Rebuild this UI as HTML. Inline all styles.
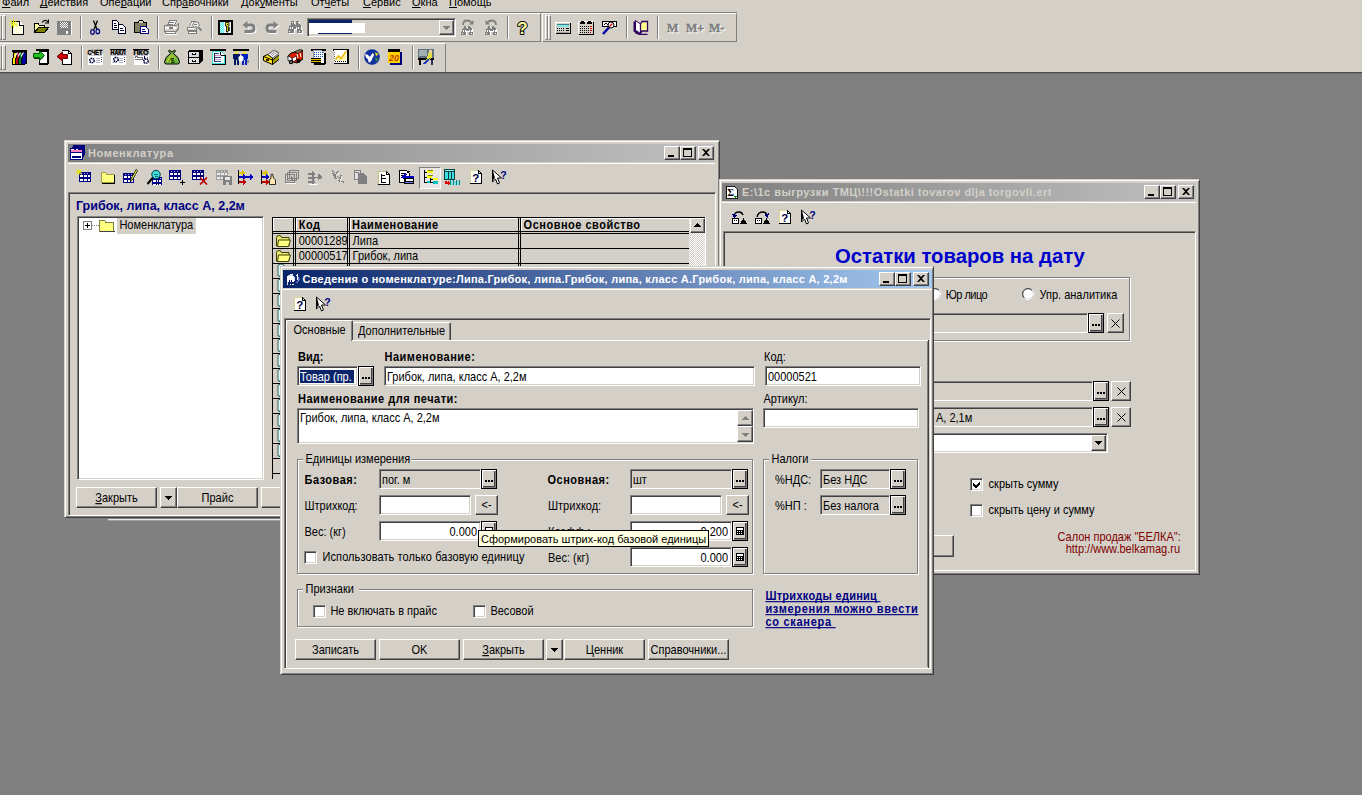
<!DOCTYPE html>
<html lang="ru"><head><meta charset="utf-8"><title>1C</title>
<style>
html,body{margin:0;padding:0}
body{width:1362px;height:795px;overflow:hidden;background:#808080;position:relative;font-family:"Liberation Sans",sans-serif;font-size:11px;color:#000}
div,svg.i{position:absolute;box-sizing:border-box}
.t{white-space:nowrap}
.face{background:#d4d0c8}
.win{background:#d4d0c8;border:1px solid;border-color:#d4d0c8 #404040 #404040 #d4d0c8;box-shadow:inset 1px 1px 0 #fff,inset -1px -1px 0 #808080}
.btn{background:#d4d0c8;border:1px solid;border-color:#fff #404040 #404040 #fff;box-shadow:inset -1px -1px 0 #808080}
.btn.k{border-color:#000;box-shadow:inset 1px 1px 0 #fff,inset -1px -1px 0 #808080,inset -2px -2px 0 #404040}
.sunk{border:1px solid;border-color:#808080 #fff #fff #808080;box-shadow:inset 1px 1px 0 #404040,inset -1px -1px 0 #d4d0c8;background:#fff}
.sunk.g{background:#d4d0c8}
.panel{border:1px solid;border-color:#808080 #fff #fff #808080;box-shadow:inset 1px 1px 0 #404040}
.grp{border:1px solid;border-color:#808080 #fff #fff #808080;box-shadow:inset 1px 1px 0 #fff,1px 1px 0 #fff inset,0 0 0 0 #fff}
.grp2{border:1px solid #808080;box-shadow:1px 1px 0 #fff,inset 1px 1px 0 #fff}
.ta{background:linear-gradient(90deg,#0a246a,#a6caf0)}
.ti{background:linear-gradient(90deg,#808080,#c0c0c0)}
.c{text-align:center}
.sepv{width:2px;border-left:1px solid #808080;border-right:1px solid #fff}
.chk{background:#fff;border:1px solid;border-color:#808080 #fff #fff #808080;box-shadow:inset 1px 1px 0 #404040,inset -1px -1px 0 #d4d0c8}
u{text-decoration:underline;text-decoration-skip-ink:none}
</style></head>
<body>
<!-- part_top -->
<div class="face" style="left:0px;top:0px;width:1362px;height:72px;"></div>
<div style="left:0px;top:72px;width:1362px;height:1px;background:#4c4c4c"></div>
<div style="left:0px;top:73px;width:1362px;height:1px;background:#707070"></div>
<div class="t" style="top:-3.91px;font-size:11px;line-height:13px;left:2px;"><u>Ф</u>айл</div>
<div class="t" style="top:-3.91px;font-size:11px;line-height:13px;left:40px;"><u>Д</u>ействия</div>
<div class="t" style="top:-3.91px;font-size:11px;line-height:13px;left:100px;">Опе<u>р</u>ации</div>
<div class="t" style="top:-3.91px;font-size:11px;line-height:13px;left:162px;">Спр<u>а</u>вочники</div>
<div class="t" style="top:-3.91px;font-size:11px;line-height:13px;left:241px;">Док<u>у</u>менты</div>
<div class="t" style="top:-3.91px;font-size:11px;line-height:13px;left:311px;">От<u>ч</u>еты</div>
<div class="t" style="top:-3.91px;font-size:11px;line-height:13px;left:363px;"><u>С</u>ервис</div>
<div class="t" style="top:-3.91px;font-size:11px;line-height:13px;left:412px;"><u>О</u>кна</div>
<div class="t" style="top:-3.91px;font-size:11px;line-height:13px;left:449px;"><u>П</u>омощь</div>
<div style="left:0px;top:12px;width:541px;height:1px;background:#808080"></div>
<div style="left:0px;top:13px;width:541px;height:29px;border-top:1px solid #fff;border-bottom:1px solid #808080;border-right:1px solid #808080"></div>
<div style="left:542px;top:13px;width:195px;height:29px;border:1px solid;border-color:#fff #808080 #808080 #fff"></div>
<div style="left:541px;top:12px;width:196px;height:1px;background:#808080"></div>
<div style="left:-1px;top:15px;width:3px;height:25px;border:1px solid;border-color:#fff #808080 #808080 #fff"></div>
<div style="left:2px;top:15px;width:4px;height:25px;border:1px solid;border-color:#fff #808080 #808080 #fff"></div>
<div style="left:545px;top:15px;width:3px;height:25px;border:1px solid;border-color:#fff #808080 #808080 #fff"></div>
<div style="left:548px;top:15px;width:3px;height:25px;border:1px solid;border-color:#fff #808080 #808080 #fff"></div>
<svg class="i" style="left:8.5px;top:19px;" width="16" height="16" viewBox="0 0 16 16" shape-rendering="crispEdges"><path d="M3.5 2.5h7l4 4v9h-11z" fill="#fff" stroke="#000" stroke-width="1" /><rect x="5" y="4" width="1" height="1" fill="#ffffc0"/><rect x="7" y="4" width="1" height="1" fill="#ffffc0"/><rect x="9" y="4" width="1" height="1" fill="#ffffc0"/><rect x="11" y="4" width="1" height="1" fill="#ffffc0"/><rect x="6" y="5" width="1" height="1" fill="#ffffc0"/><rect x="8" y="5" width="1" height="1" fill="#ffffc0"/><rect x="10" y="5" width="1" height="1" fill="#ffffc0"/><rect x="12" y="5" width="1" height="1" fill="#ffffc0"/><rect x="5" y="6" width="1" height="1" fill="#ffffc0"/><rect x="7" y="6" width="1" height="1" fill="#ffffc0"/><rect x="9" y="6" width="1" height="1" fill="#ffffc0"/><rect x="11" y="6" width="1" height="1" fill="#ffffc0"/><rect x="6" y="7" width="1" height="1" fill="#ffffc0"/><rect x="8" y="7" width="1" height="1" fill="#ffffc0"/><rect x="10" y="7" width="1" height="1" fill="#ffffc0"/><rect x="12" y="7" width="1" height="1" fill="#ffffc0"/><rect x="5" y="8" width="1" height="1" fill="#ffffc0"/><rect x="7" y="8" width="1" height="1" fill="#ffffc0"/><rect x="9" y="8" width="1" height="1" fill="#ffffc0"/><rect x="11" y="8" width="1" height="1" fill="#ffffc0"/><rect x="6" y="9" width="1" height="1" fill="#ffffc0"/><rect x="8" y="9" width="1" height="1" fill="#ffffc0"/><rect x="10" y="9" width="1" height="1" fill="#ffffc0"/><rect x="12" y="9" width="1" height="1" fill="#ffffc0"/><rect x="5" y="10" width="1" height="1" fill="#ffffc0"/><rect x="7" y="10" width="1" height="1" fill="#ffffc0"/><rect x="9" y="10" width="1" height="1" fill="#ffffc0"/><rect x="11" y="10" width="1" height="1" fill="#ffffc0"/><rect x="6" y="11" width="1" height="1" fill="#ffffc0"/><rect x="8" y="11" width="1" height="1" fill="#ffffc0"/><rect x="10" y="11" width="1" height="1" fill="#ffffc0"/><rect x="12" y="11" width="1" height="1" fill="#ffffc0"/><rect x="5" y="12" width="1" height="1" fill="#ffffc0"/><rect x="7" y="12" width="1" height="1" fill="#ffffc0"/><rect x="9" y="12" width="1" height="1" fill="#ffffc0"/><rect x="11" y="12" width="1" height="1" fill="#ffffc0"/><rect x="6" y="13" width="1" height="1" fill="#ffffc0"/><rect x="8" y="13" width="1" height="1" fill="#ffffc0"/><rect x="10" y="13" width="1" height="1" fill="#ffffc0"/><rect x="12" y="13" width="1" height="1" fill="#ffffc0"/><rect x="5" y="14" width="1" height="1" fill="#ffffc0"/><rect x="7" y="14" width="1" height="1" fill="#ffffc0"/><rect x="9" y="14" width="1" height="1" fill="#ffffc0"/><rect x="11" y="14" width="1" height="1" fill="#ffffc0"/><path d="M10.5 2.5v4h4" fill="#fff" stroke="#000" stroke-width="1" /><path d="M0.5 1.5l8 6M8 1l-6 7M0 5h9M4.5 0v9" fill="none" stroke="#e8e800" stroke-width="1" shape-rendering="auto"/><path d="M3 3l3 3M6 3l-3 3" fill="none" stroke="#ffff60" stroke-width="1" shape-rendering="auto"/></svg>
<svg class="i" style="left:32.5px;top:19px;" width="16" height="16" viewBox="0 0 16 16" shape-rendering="crispEdges"><path d="M1.5 13.5v-9h3.5l1 1.5h5v3" fill="#ffffa0" stroke="#000" stroke-width="1" /><path d="M1.5 13.5l4 -5h10l-4 5z" fill="#808000" stroke="#000" stroke-width="1" /><path d="M9 3.5q3 -4 6 -0.5" fill="none" stroke="#000" stroke-width="1.2" shape-rendering="auto"/><path d="M15.5 0.5v3.5h-3.5" fill="none" stroke="#000" stroke-width="1.2" shape-rendering="auto"/></svg>
<svg class="i" style="left:56px;top:19px;" width="16" height="16" viewBox="0 0 16 16" shape-rendering="crispEdges"><rect x="1" y="2" width="14" height="14" fill="#808080"/><rect x="4" y="3" width="1" height="1" fill="#fff"/><rect x="6" y="3" width="1" height="1" fill="#fff"/><rect x="8" y="3" width="1" height="1" fill="#fff"/><rect x="10" y="3" width="1" height="1" fill="#fff"/><rect x="5" y="4" width="1" height="1" fill="#fff"/><rect x="7" y="4" width="1" height="1" fill="#fff"/><rect x="9" y="4" width="1" height="1" fill="#fff"/><rect x="11" y="4" width="1" height="1" fill="#fff"/><rect x="4" y="5" width="1" height="1" fill="#fff"/><rect x="6" y="5" width="1" height="1" fill="#fff"/><rect x="8" y="5" width="1" height="1" fill="#fff"/><rect x="10" y="5" width="1" height="1" fill="#fff"/><rect x="5" y="6" width="1" height="1" fill="#fff"/><rect x="7" y="6" width="1" height="1" fill="#fff"/><rect x="9" y="6" width="1" height="1" fill="#fff"/><rect x="11" y="6" width="1" height="1" fill="#fff"/><rect x="4" y="7" width="1" height="1" fill="#fff"/><rect x="6" y="7" width="1" height="1" fill="#fff"/><rect x="8" y="7" width="1" height="1" fill="#fff"/><rect x="10" y="7" width="1" height="1" fill="#fff"/><rect x="5" y="8" width="1" height="1" fill="#fff"/><rect x="7" y="8" width="1" height="1" fill="#fff"/><rect x="9" y="8" width="1" height="1" fill="#fff"/><rect x="11" y="8" width="1" height="1" fill="#fff"/><rect x="10" y="12" width="2" height="3" fill="#fff"/><rect x="2" y="16" width="14" height="1" fill="#fff"/><rect x="15" y="3" width="1" height="14" fill="#fff"/></svg>
<svg class="i" style="left:87px;top:19px;" width="16" height="16" viewBox="0 0 16 16" shape-rendering="crispEdges"><path d="M6.5 1.5l3.5 9M10.5 1.5l-3.5 9" fill="none" stroke="#000" stroke-width="1.3" shape-rendering="auto"/><ellipse cx="5.5" cy="13" rx="1.8" ry="2.3" fill="none" stroke="#000080" stroke-width="1.2" shape-rendering="auto"/><ellipse cx="10.8" cy="12.4" rx="1.8" ry="2.3" fill="none" stroke="#000080" stroke-width="1.2" shape-rendering="auto"/></svg>
<svg class="i" style="left:109.5px;top:19px;" width="16" height="16" viewBox="0 0 16 16" shape-rendering="crispEdges"><path d="M2.5 1.5h4l2 2v7h-6z" fill="#fff" stroke="#000030" stroke-width="1" /><path d="M8.5 5.5h4l3 3v6h-7z" fill="#fff" stroke="#000030" stroke-width="1" /><rect x="4" y="4" width="2" height="1" fill="#000030"/><rect x="4" y="6" width="3" height="1" fill="#000030"/><rect x="4" y="8" width="3" height="1" fill="#000030"/><rect x="10" y="9" width="3" height="1" fill="#000030"/><rect x="10" y="11" width="4" height="1" fill="#000030"/></svg>
<svg class="i" style="left:133px;top:19px;" width="16" height="16" viewBox="0 0 16 16" shape-rendering="crispEdges"><path d="M1.5 3.5h12v10h-12z" fill="#808060" stroke="#000" stroke-width="1" /><path d="M5 3.5l1.5 -2h3l1.5 2" fill="#d4d0c8" stroke="#000" stroke-width="1" /><path d="M7.5 7.5h5l2.5 2.5v4.500h-7.5z" fill="#fff" stroke="#000080" stroke-width="1" /><rect x="9" y="10" width="3" height="1" fill="#000080"/><rect x="9" y="12" width="4" height="1" fill="#000080"/></svg>
<svg class="i" style="left:163px;top:19px;" width="16" height="16" viewBox="0 0 16 16" shape-rendering="crispEdges"><path d="M4.5 6.5l2 -5h7l-2 5z" fill="#fff" stroke="#808080" stroke-width="1" /><rect x="6" y="3" width="5" height="1" fill="#808080"/><rect x="5" y="5" width="5" height="1" fill="#808080"/><path d="M1.5 6.5h12l2 -1.5v5l-2 2h-12z" fill="#d4d0c8" stroke="#808080" stroke-width="1" /><rect x="2" y="8" width="11" height="2" fill="#fff"/><rect x="6" y="8" width="4" height="2" fill="#808080"/><path d="M2.5 12.5h10v2h-10z" fill="#fff" stroke="#808080" stroke-width="1" /><rect x="2" y="15" width="12" height="1" fill="#fff"/></svg>
<svg class="i" style="left:186px;top:19px;" width="16" height="16" viewBox="0 0 16 16" shape-rendering="crispEdges"><path d="M3.5 7.5l2 -5h4" fill="#fff" stroke="#808080" stroke-width="1" /><path d="M1.5 8.5h9v3h-9z" fill="#d4d0c8" stroke="#808080" stroke-width="1" /><rect x="2" y="9" width="8" height="1" fill="#fff"/><path d="M2.5 12.5h8v2h-8z" fill="#fff" stroke="#808080" stroke-width="1" /><circle cx="10" cy="6" r="3.2" fill="#f0f0f0" stroke="#808080" shape-rendering="auto"/><path d="M12.5 8.5l3 3" fill="none" stroke="#808080" stroke-width="1.8" shape-rendering="auto"/><rect x="8" y="5" width="3" height="1" fill="#808080"/><rect x="9" y="7" width="2" height="1" fill="#808080"/></svg>
<svg class="i" style="left:217px;top:19px;" width="16" height="16" viewBox="0 0 16 16" shape-rendering="crispEdges"><rect x="1" y="1" width="15" height="15" fill="#000"/><rect x="3" y="3" width="11" height="11" fill="#f0ffff"/><rect x="3" y="3" width="4" height="11" fill="#60e8e8"/><rect x="3" y="3" width="1" height="1" fill="#b0ffff"/><rect x="5" y="3" width="1" height="1" fill="#b0ffff"/><rect x="4" y="4" width="1" height="1" fill="#b0ffff"/><rect x="6" y="4" width="1" height="1" fill="#b0ffff"/><rect x="3" y="5" width="1" height="1" fill="#b0ffff"/><rect x="5" y="5" width="1" height="1" fill="#b0ffff"/><rect x="4" y="6" width="1" height="1" fill="#b0ffff"/><rect x="6" y="6" width="1" height="1" fill="#b0ffff"/><rect x="3" y="7" width="1" height="1" fill="#b0ffff"/><rect x="5" y="7" width="1" height="1" fill="#b0ffff"/><rect x="4" y="8" width="1" height="1" fill="#b0ffff"/><rect x="6" y="8" width="1" height="1" fill="#b0ffff"/><rect x="3" y="9" width="1" height="1" fill="#b0ffff"/><rect x="5" y="9" width="1" height="1" fill="#b0ffff"/><rect x="4" y="10" width="1" height="1" fill="#b0ffff"/><rect x="6" y="10" width="1" height="1" fill="#b0ffff"/><rect x="3" y="11" width="1" height="1" fill="#b0ffff"/><rect x="5" y="11" width="1" height="1" fill="#b0ffff"/><rect x="4" y="12" width="1" height="1" fill="#b0ffff"/><rect x="6" y="12" width="1" height="1" fill="#b0ffff"/><rect x="3" y="13" width="1" height="1" fill="#b0ffff"/><rect x="5" y="13" width="1" height="1" fill="#b0ffff"/><path d="M8.5 3.5h3.5v3.500h-1v1.5h1.5v1h-1.5v1h1.5v1h-1.5v1.500h-1.500v-6h-1z" fill="#f0f000" stroke="#000" stroke-width="0.8" shape-rendering="auto"/><rect x="10" y="4.5" width="1" height="1" fill="#000"/></svg>
<svg class="i" style="left:240.5px;top:19px;" width="16" height="16" viewBox="0 0 16 16" shape-rendering="crispEdges"><path d="M1.5 6L6.5 2V4.5H10Q14.5 4.5 14.5 9.200Q14.5 14 10 14H3.5V11H10Q11.5 11 11.5 9.200Q11.5 7.5 10 7.500H6.5V10Z" fill="#fff" transform="translate(1,1)" shape-rendering="auto"/><path d="M1.5 6L6.5 2V4.5H10Q14.5 4.5 14.5 9.200Q14.5 14 10 14H3.5V11H10Q11.5 11 11.5 9.200Q11.5 7.5 10 7.500H6.5V10Z" fill="#808080" shape-rendering="auto"/></svg>
<svg class="i" style="left:263.5px;top:19px;" width="16" height="16" viewBox="0 0 16 16" shape-rendering="crispEdges"><path d="M1.5 6L6.5 2V4.5H10Q14.5 4.5 14.5 9.200Q14.5 14 10 14H3.5V11H10Q11.5 11 11.5 9.200Q11.5 7.5 10 7.500H6.5V10Z" fill="#fff" transform="translate(17,1) scale(-1,1)" shape-rendering="auto"/><path d="M1.5 6L6.5 2V4.5H10Q14.5 4.5 14.5 9.200Q14.5 14 10 14H3.5V11H10Q11.5 11 11.5 9.200Q11.5 7.5 10 7.500H6.5V10Z" fill="#808080" transform="translate(16,0) scale(-1,1)" shape-rendering="auto"/></svg>
<svg class="i" style="left:286.5px;top:19px;" width="16" height="16" viewBox="0 0 16 16" shape-rendering="crispEdges"><path d="M1 14l1 -7l2 -2v-3h3v3l1 1l1 -1v-3h3v3l2 2l1 7h-5v-4h-3v4z" fill="#fff" transform="translate(1,1)"/><path d="M1 14l1 -7l2 -2v-3h3v3l1 1l1 -1v-3h3v3l2 2l1 7h-5v-4h-3v4z" fill="#808080" /><rect x="5" y="3" width="1" height="1" fill="#fff"/><rect x="11" y="3" width="1" height="1" fill="#fff"/><rect x="3" y="8" width="1" height="2" fill="#fff"/><rect x="5" y="8" width="1" height="2" fill="#fff"/><rect x="9" y="8" width="1" height="2" fill="#fff"/><rect x="11" y="8" width="1" height="2" fill="#fff"/><rect x="2" y="12" width="1" height="1" fill="#fff"/><rect x="12" y="12" width="1" height="1" fill="#fff"/></svg>
<svg class="i" style="left:459px;top:19px;" width="16" height="16" viewBox="0 0 16 16" shape-rendering="crispEdges"><path d="M4 6q0 -4.500 4 -4.500q3 0 4.500 2" fill="none" stroke="#808080" stroke-width="1.8" shape-rendering="auto"/><path d="M14.500 1v4.500h-4.500z" fill="#808080" shape-rendering="auto"/><path d="M2 16l1 -6l2 -2v-1h2v2l1 1l1 -1v-2h2v1l2 2l1 6h-4v-4h-3v4z" fill="#fff" transform="translate(1,1)"/><path d="M2 16l1 -6l2 -2v-1h2v2l1 1l1 -1v-2h2v1l2 2l1 6h-4v-4h-3v4z" fill="#808080" /><rect x="4" y="11" width="1" height="2" fill="#fff"/><rect x="6" y="11" width="1" height="2" fill="#fff"/><rect x="10" y="11" width="1" height="2" fill="#fff"/><rect x="12" y="11" width="1" height="2" fill="#fff"/><rect x="3" y="14" width="1" height="1" fill="#fff"/><rect x="12" y="14" width="1" height="1" fill="#fff"/></svg>
<svg class="i" style="left:483px;top:19px;" width="16" height="16" viewBox="0 0 16 16" shape-rendering="crispEdges"><g transform="translate(17,0) scale(-1,1)"><path d="M4 6q0 -4.500 4 -4.500q3 0 4.500 2" fill="none" stroke="#808080" stroke-width="1.8" shape-rendering="auto"/><path d="M14.500 1v4.500h-4.500z" fill="#808080" shape-rendering="auto"/></g><path d="M2 16l1 -6l2 -2v-1h2v2l1 1l1 -1v-2h2v1l2 2l1 6h-4v-4h-3v4z" fill="#fff" transform="translate(1,1)"/><path d="M2 16l1 -6l2 -2v-1h2v2l1 1l1 -1v-2h2v1l2 2l1 6h-4v-4h-3v4z" fill="#808080" /><rect x="4" y="11" width="1" height="2" fill="#fff"/><rect x="6" y="11" width="1" height="2" fill="#fff"/><rect x="10" y="11" width="1" height="2" fill="#fff"/><rect x="12" y="11" width="1" height="2" fill="#fff"/><rect x="3" y="14" width="1" height="1" fill="#fff"/><rect x="12" y="14" width="1" height="1" fill="#fff"/></svg>
<svg class="i" style="left:514px;top:19px;" width="16" height="16" viewBox="0 0 16 16" shape-rendering="crispEdges"><text x="8.5" y="14.800" font-family="Liberation Sans,sans-serif" font-weight="bold" font-size="17" text-anchor="middle" fill="#ffffa0" stroke="#000" stroke-width="2" paint-order="stroke" stroke-linejoin="round" shape-rendering="auto">?</text></svg>
<svg class="i" style="left:555px;top:19px;" width="16" height="16" viewBox="0 0 16 16" shape-rendering="crispEdges"><rect x="0" y="3" width="15" height="11" fill="#fff"/><rect x="1" y="4" width="15" height="11" fill="#000"/><rect x="1" y="4" width="14" height="10" fill="#d4d0c8"/><rect x="2" y="5" width="12" height="3" fill="#80e8e8"/><rect x="2" y="5" width="12" height="1" fill="#408080"/><rect x="2" y="9" width="1" height="1" fill="#000"/><rect x="2" y="11" width="1" height="1" fill="#000"/><rect x="4" y="9" width="1" height="1" fill="#000"/><rect x="4" y="11" width="1" height="1" fill="#000"/><rect x="6" y="9" width="1" height="1" fill="#000"/><rect x="6" y="11" width="1" height="1" fill="#000"/><rect x="8" y="9" width="1" height="1" fill="#000"/><rect x="8" y="11" width="1" height="1" fill="#000"/><rect x="11" y="9" width="3" height="1" fill="#000"/><rect x="11" y="11" width="3" height="1" fill="#000"/><rect x="2" y="13" width="12" height="1" fill="#a0a0a0"/></svg>
<svg class="i" style="left:578px;top:19px;" width="16" height="16" viewBox="0 0 16 16" shape-rendering="crispEdges"><rect x="0" y="2" width="15" height="13" fill="#fff"/><rect x="1" y="3" width="15" height="13" fill="#000"/><rect x="1" y="3" width="14" height="12" fill="#d4d0c8"/><rect x="2" y="3" width="5" height="2" fill="#000"/><rect x="9" y="3" width="5" height="2" fill="#000"/><rect x="3" y="2" width="3" height="1" fill="#000"/><rect x="10" y="2" width="3" height="1" fill="#000"/><rect x="2" y="7" width="1" height="1" fill="#000"/><rect x="2" y="9" width="1" height="1" fill="#000"/><rect x="2" y="11" width="1" height="1" fill="#000"/><rect x="2" y="13" width="1" height="1" fill="#000"/><rect x="4" y="7" width="1" height="1" fill="#000"/><rect x="4" y="9" width="1" height="1" fill="#000"/><rect x="4" y="11" width="1" height="1" fill="#000"/><rect x="4" y="13" width="1" height="1" fill="#000"/><rect x="6" y="7" width="1" height="1" fill="#000"/><rect x="6" y="9" width="1" height="1" fill="#000"/><rect x="6" y="11" width="1" height="1" fill="#000"/><rect x="6" y="13" width="1" height="1" fill="#000"/><rect x="8" y="7" width="1" height="1" fill="#000"/><rect x="8" y="9" width="1" height="1" fill="#000"/><rect x="8" y="11" width="1" height="1" fill="#000"/><rect x="8" y="13" width="1" height="1" fill="#000"/><rect x="10" y="7" width="1" height="1" fill="#000"/><rect x="10" y="9" width="1" height="1" fill="#000"/><rect x="10" y="11" width="1" height="1" fill="#000"/><rect x="10" y="13" width="1" height="1" fill="#000"/><rect x="12" y="7" width="1" height="1" fill="#e00000"/><rect x="12" y="9" width="1" height="1" fill="#e00000"/><rect x="12" y="11" width="1" height="1" fill="#e00000"/><rect x="12" y="13" width="1" height="1" fill="#e00000"/><rect x="12" y="7" width="2" height="1" fill="#e00000"/><rect x="12" y="9" width="2" height="1" fill="#e00000"/><rect x="12" y="11" width="2" height="1" fill="#e00000"/></svg>
<svg class="i" style="left:601px;top:19px;" width="16" height="16" viewBox="0 0 16 16" shape-rendering="crispEdges"><rect x="1" y="2" width="15" height="6" fill="#000"/><rect x="2" y="3" width="13" height="4" fill="#fff"/><path d="M3 6l2 -2l2 2l2 -2" fill="none" stroke="#000" stroke-width="1" shape-rendering="auto"/><path d="M8 8.500l-6 6.500" fill="none" stroke="#0000a0" stroke-width="2.5" shape-rendering="auto"/><circle cx="10" cy="6" r="3" fill="#fff" stroke="#000" shape-rendering="auto"/><path d="M8.500 7.500l3 -3" fill="none" stroke="#e00000" stroke-width="1.2" shape-rendering="auto"/><rect x="14" y="4" width="1" height="2" fill="#fff"/></svg>
<svg class="i" style="left:632.5px;top:19px;" width="16" height="16" viewBox="0 0 16 16" shape-rendering="crispEdges"><path d="M1.5 2.5v9.500l6 3.500" fill="none" stroke="#300060" stroke-width="2" shape-rendering="auto"/><path d="M2.5 1.5l5 3.500v9.500l-5 -3.500z" fill="#fff" stroke="#300060" stroke-width="1" shape-rendering="auto"/><path d="M7.500 5l1.500 -2.500h5.500v9.500h-5.500l-1.500 2.500z" fill="#ffff90" stroke="#300060" stroke-width="1.3" shape-rendering="auto"/><path d="M2 13.500l5.500 2h7" fill="none" stroke="#300060" stroke-width="1.5" shape-rendering="auto"/></svg>
<div class="sepv" style="left:80px;top:16px;width:2px;height:23px;"></div>
<div class="sepv" style="left:157px;top:16px;width:2px;height:23px;"></div>
<div class="sepv" style="left:211px;top:16px;width:2px;height:23px;"></div>
<div class="sepv" style="left:507px;top:16px;width:2px;height:23px;"></div>
<div class="sepv" style="left:626px;top:16px;width:2px;height:23px;"></div>
<div class="sepv" style="left:657px;top:16px;width:2px;height:23px;"></div>
<div class="sunk g" style="left:307px;top:18px;width:149px;height:19px;"></div>
<div style="left:309px;top:20px;width:43px;height:14px;background:#0a246a"></div>
<div style="left:309px;top:23px;width:56px;height:10px;background:#fff"></div>
<div style="left:309px;top:23px;width:9px;height:11px;background:#fff"></div>
<div class="btn" style="left:439px;top:20px;width:15px;height:15px;"><svg class="i" style="left:3px;top:5px;" width="7" height="4" viewBox="0 0 7 4" shape-rendering="crispEdges"><path d="M0 0h7l-3.5 4z" fill="#808080" /><path d="M1 1h7l-3.5 4z" fill="#fff" stroke="none" stroke-width="0" style="display:none"/></svg>
</div>
<div class="t" style="top:21.64px;font-size:12px;line-height:14px;left:668px;font-weight:bold;color:#fff;font-family:'Liberation Serif',serif;-webkit-text-stroke:0.5px #fff;">M</div>
<div class="t" style="top:20.64px;font-size:12px;line-height:14px;left:667px;font-weight:bold;color:#808080;font-family:'Liberation Serif',serif;-webkit-text-stroke:0.5px #808080;">M</div>
<div class="t" style="top:21.64px;font-size:12px;line-height:14px;left:687px;font-weight:bold;color:#fff;font-family:'Liberation Serif',serif;-webkit-text-stroke:0.5px #fff;">M+</div>
<div class="t" style="top:20.64px;font-size:12px;line-height:14px;left:686px;font-weight:bold;color:#808080;font-family:'Liberation Serif',serif;-webkit-text-stroke:0.5px #808080;">M+</div>
<div class="t" style="top:21.64px;font-size:12px;line-height:14px;left:710px;font-weight:bold;color:#fff;font-family:'Liberation Serif',serif;-webkit-text-stroke:0.5px #fff;">M-</div>
<div class="t" style="top:20.64px;font-size:12px;line-height:14px;left:709px;font-weight:bold;color:#808080;font-family:'Liberation Serif',serif;-webkit-text-stroke:0.5px #808080;">M-</div>
<div style="left:0px;top:43px;width:446px;height:29px;border-top:1px solid #fff;border-right:1px solid #808080"></div>
<div style="left:-1px;top:45px;width:3px;height:25px;border:1px solid;border-color:#fff #808080 #808080 #fff"></div>
<div style="left:2px;top:45px;width:4px;height:25px;border:1px solid;border-color:#fff #808080 #808080 #fff"></div>
<svg class="i" style="left:10.5px;top:49px;" width="16" height="16" viewBox="0 0 16 16" shape-rendering="crispEdges"><path d="M1.5 15.5l1 -12h3l-1 12z" fill="#ffe800" stroke="#000" stroke-width="1" /><path d="M4.5 15.5l1 -12h3l-1 12z" fill="#c00020" stroke="#000" stroke-width="1" /><path d="M7.5 15.5l1 -12h3l-1 12z" fill="#008020" stroke="#000" stroke-width="1" /><path d="M10.5 15.5l1 -12h4v10.500l-2 1.5z" fill="#0000a0" stroke="#000" stroke-width="1" /><rect x="1" y="1" width="15" height="2" fill="#000"/><path d="M6.5 3.5l-2.5 4M9.5 3.5l-2.5 4M12.500 3.5l-2.5 4" fill="none" stroke="#fff" stroke-width="1.2" shape-rendering="auto"/></svg>
<svg class="i" style="left:33px;top:49px;" width="16" height="16" viewBox="0 0 16 16" shape-rendering="crispEdges"><path d="M6.5 2.5h8v12h-8v-4" fill="#fff" stroke="#000" stroke-width="1" /><rect x="3" y="0" width="13" height="2" fill="#000"/><rect x="14" y="2" width="2" height="13" fill="#000"/><rect x="6" y="14" width="9" height="2" fill="#000"/><path d="M0.5 4.5h6v-2.500l5 4.500l-5 4.500v-2.500h-6z" fill="#20c020" stroke="#006000" stroke-width="1" shape-rendering="auto"/><path d="M1 9.5h5.500v2l4 -3.500" fill="none" stroke="#004000" stroke-width="1" shape-rendering="auto"/></svg>
<svg class="i" style="left:56px;top:49px;" width="16" height="16" viewBox="0 0 16 16" shape-rendering="crispEdges"><path d="M5.5 1.5h7l3 3v10.500h-9v-3" fill="#fff" stroke="#000" stroke-width="1" /><path d="M12.5 1.5v3h3" fill="none" stroke="#000" stroke-width="1" /><path d="M11.5 5.5h-5v-2.500l-5.500 4.500l5.500 4.500v-2.500h5z" fill="#d00000" stroke="#600000" stroke-width="1" shape-rendering="auto"/><rect x="7" y="15" width="9" height="1" fill="#000"/><rect x="15" y="5" width="1" height="10" fill="#000"/></svg>
<svg class="i" style="left:87px;top:49px;" width="16" height="16" viewBox="0 0 16 16" shape-rendering="crispEdges"><rect x="1" y="5" width="15" height="11" fill="#fff"/><text x="0.5" y="5.600" font-family="Liberation Sans,sans-serif" font-weight="bold" font-size="7.5" fill="#000" stroke="#000" stroke-width="0.4" textLength="15" lengthAdjust="spacingAndGlyphs">СЧЕТ</text><rect x="2" y="6" width="13" height="1" fill="#c8c8d8"/><rect x="9" y="9" width="4" height="1" fill="#b0b0c8"/><rect x="9" y="11" width="4" height="1" fill="#b0b0c8"/><rect x="9" y="13" width="4" height="1" fill="#b0b0c8"/><rect x="14" y="8" width="1" height="1" fill="#404060"/><rect x="14" y="10" width="1" height="1" fill="#404060"/><rect x="14" y="12" width="1" height="1" fill="#404060"/><circle cx="5" cy="11.5" r="2.2" fill="#fff" stroke="#000040" stroke-width="1.600" stroke-dasharray="1.4 0.6" shape-rendering="auto"/></svg>
<svg class="i" style="left:110px;top:49px;" width="16" height="16" viewBox="0 0 16 16" shape-rendering="crispEdges"><rect x="0" y="0" width="16" height="1" fill="#000"/><rect x="1" y="5" width="15" height="11" fill="#fff"/><text x="0.5" y="5.600" font-family="Liberation Sans,sans-serif" font-weight="bold" font-size="7.5" fill="#000" stroke="#000" stroke-width="0.4" textLength="15" lengthAdjust="spacingAndGlyphs">НАКЛ</text><rect x="2" y="6" width="13" height="1" fill="#c8c8d8"/><rect x="9" y="9" width="4" height="1" fill="#b0b0c8"/><rect x="9" y="11" width="4" height="1" fill="#b0b0c8"/><rect x="9" y="13" width="4" height="1" fill="#b0b0c8"/><rect x="14" y="8" width="1" height="1" fill="#404060"/><rect x="14" y="10" width="1" height="1" fill="#404060"/><rect x="14" y="12" width="1" height="1" fill="#404060"/><circle cx="6" cy="10.5" r="2.2" fill="#fff" stroke="#000040" stroke-width="1.600" stroke-dasharray="1.4 0.6" shape-rendering="auto"/><rect x="2" y="13" width="5" height="1" fill="#b0b0c8"/></svg>
<svg class="i" style="left:133px;top:49px;" width="16" height="16" viewBox="0 0 16 16" shape-rendering="crispEdges"><rect x="0" y="0" width="16" height="1" fill="#000"/><rect x="1" y="5" width="15" height="11" fill="#fff"/><text x="0.5" y="5.600" font-family="Liberation Sans,sans-serif" font-weight="bold" font-size="7.5" fill="#000" stroke="#000" stroke-width="0.4" textLength="15" lengthAdjust="spacingAndGlyphs">ПКО</text><rect x="2" y="6" width="13" height="1" fill="#c8c8d8"/><rect x="9" y="9" width="4" height="1" fill="#b0b0c8"/><rect x="9" y="11" width="4" height="1" fill="#b0b0c8"/><rect x="9" y="13" width="4" height="1" fill="#b0b0c8"/><rect x="14" y="8" width="1" height="1" fill="#404060"/><rect x="14" y="10" width="1" height="1" fill="#404060"/><rect x="14" y="12" width="1" height="1" fill="#404060"/><rect x="9" y="9" width="6" height="5" fill="#fff"/><path d="M1.5 10.5h8v-2h-5.500v-1.500h-2v1.500" fill="#fff" stroke="#707070" stroke-width="1" /><path d="M11.500 7v3" fill="none" stroke="#000040" stroke-width="1" /><circle cx="13" cy="12" r="2.2" fill="#fff" stroke="#000040" stroke-width="1.600" stroke-dasharray="1.4 0.6" shape-rendering="auto"/></svg>
<svg class="i" style="left:164px;top:49px;" width="16" height="16" viewBox="0 0 16 16" shape-rendering="crispEdges"><path d="M5.5 1l2.500 2l2.500 -2l1 1l-2 2.500q6 4 6 8.500q0 2 -2 2h-11q-2 0 -2 -2q0 -4.500 6 -8.500l-2 -2.500z" fill="#70b040" stroke="#000" stroke-width="1" shape-rendering="auto"/><path d="M7 6l-4 7M9 6l-3 8M11 8l-2 6" fill="none" stroke="#e0e020" stroke-width="1" shape-rendering="auto"/><text x="8.5" y="13.5" font-family="Liberation Sans,sans-serif" font-weight="bold" font-size="8" text-anchor="middle" fill="#004000">$</text></svg>
<svg class="i" style="left:187px;top:49px;" width="16" height="16" viewBox="0 0 16 16" shape-rendering="crispEdges"><path d="M1 2.500l2 -2h13v10.500l-3 4h-12z" fill="#000" /><rect x="2" y="3" width="10" height="5" fill="#d8d8e0"/><rect x="2" y="9" width="10" height="5" fill="#fff"/><rect x="2" y="9" width="1" height="1" fill="#c8c8c8"/><rect x="4" y="9" width="1" height="1" fill="#c8c8c8"/><rect x="6" y="9" width="1" height="1" fill="#c8c8c8"/><rect x="8" y="9" width="1" height="1" fill="#c8c8c8"/><rect x="10" y="9" width="1" height="1" fill="#c8c8c8"/><rect x="3" y="10" width="1" height="1" fill="#c8c8c8"/><rect x="5" y="10" width="1" height="1" fill="#c8c8c8"/><rect x="7" y="10" width="1" height="1" fill="#c8c8c8"/><rect x="9" y="10" width="1" height="1" fill="#c8c8c8"/><rect x="11" y="10" width="1" height="1" fill="#c8c8c8"/><rect x="2" y="11" width="1" height="1" fill="#c8c8c8"/><rect x="4" y="11" width="1" height="1" fill="#c8c8c8"/><rect x="6" y="11" width="1" height="1" fill="#c8c8c8"/><rect x="8" y="11" width="1" height="1" fill="#c8c8c8"/><rect x="10" y="11" width="1" height="1" fill="#c8c8c8"/><rect x="3" y="12" width="1" height="1" fill="#c8c8c8"/><rect x="5" y="12" width="1" height="1" fill="#c8c8c8"/><rect x="7" y="12" width="1" height="1" fill="#c8c8c8"/><rect x="9" y="12" width="1" height="1" fill="#c8c8c8"/><rect x="11" y="12" width="1" height="1" fill="#c8c8c8"/><rect x="2" y="13" width="1" height="1" fill="#c8c8c8"/><rect x="4" y="13" width="1" height="1" fill="#c8c8c8"/><rect x="6" y="13" width="1" height="1" fill="#c8c8c8"/><rect x="8" y="13" width="1" height="1" fill="#c8c8c8"/><rect x="10" y="13" width="1" height="1" fill="#c8c8c8"/><rect x="5" y="4" width="4" height="2" fill="#000"/><rect x="6" y="4" width="2" height="1" fill="#fff"/><rect x="5" y="11" width="4" height="2" fill="#000"/><rect x="6" y="11" width="2" height="1" fill="#fff"/></svg>
<svg class="i" style="left:210px;top:49px;" width="16" height="16" viewBox="0 0 16 16" shape-rendering="crispEdges"><rect x="0" y="0" width="16" height="1.5" fill="#000"/><path d="M2.5 2.5h8l4 4v8h-12z" fill="#f0ffff" stroke="#40d8d8" stroke-width="1.5" /><path d="M10.5 2.5v4h4" fill="#fff" stroke="#000" stroke-width="1" /><rect x="5" y="4" width="4" height="1" fill="#404080"/><rect x="5" y="6" width="6" height="1" fill="#d090c0"/><rect x="5" y="8" width="6" height="1" fill="#404080"/><rect x="5" y="10" width="6" height="1" fill="#d090c0"/><rect x="5" y="12" width="6" height="1" fill="#404080"/><rect x="4" y="4" width="1" height="9" fill="#202040"/><rect x="2" y="15" width="14" height="1" fill="#000"/><rect x="15" y="6" width="1" height="10" fill="#000"/></svg>
<svg class="i" style="left:233px;top:49px;" width="16" height="16" viewBox="0 0 16 16" shape-rendering="crispEdges"><rect x="0" y="0" width="16" height="1.5" fill="#000"/><rect x="2" y="2" width="3" height="3" fill="#e8e040"/><rect x="10" y="2" width="3" height="3" fill="#e8e040"/><path d="M0 5h7v5h-1v6h-2v-5h-1v5h-2v-6h-1z" fill="#001860" /><path d="M8 5h7v5h-1v6h-2v-5h-1v5h-2v-6h-1z" fill="#0020c0" /><path d="M5.5 8l2.500 -2l2.500 2v3l-2.500 2l-2.500 -2z" fill="#fff" shape-rendering="auto"/><rect x="14" y="11" width="2" height="3" fill="#909090"/></svg>
<svg class="i" style="left:263px;top:49px;" width="16" height="16" viewBox="0 0 16 16" shape-rendering="crispEdges"><path d="M4.5 5.5l6.500 -4.500l5 3l-7 5.500z" fill="#fff" stroke="#606060" stroke-width="1" shape-rendering="auto"/><path d="M6 5l6 -4M7.500 6l6 -4.500M9 7l6 -4.500" fill="none" stroke="#909090" stroke-width="1" shape-rendering="auto"/><path d="M0.5 7.5l4 -2l5 3.500l0 6z" fill="#ffe020" stroke="#000" stroke-width="1" shape-rendering="auto"/><path d="M0.5 7.5l9 3.500v4.500l-9 -4z" fill="#ffe020" stroke="#000" stroke-width="1" shape-rendering="auto"/><path d="M9.5 11l7 -5.500v4.500l-7 5.500z" fill="#a0a000" stroke="#000" stroke-width="1" shape-rendering="auto"/><rect x="3" y="10" width="3" height="1.5" fill="#402000"/></svg>
<svg class="i" style="left:287px;top:49px;" width="16" height="16" viewBox="0 0 16 16" shape-rendering="crispEdges"><path d="M1 7l3 -3l5 -1l6 -2l1 2v7l-6 4l-8 -2z" fill="#d82000" stroke="#000" stroke-width="1" shape-rendering="auto"/><path d="M7 3l6 -2.500l3 1l-5 3z" fill="#907050" stroke="#000" stroke-width="0.7" shape-rendering="auto"/><path d="M1 7l4 2v4l-4 -1.500z" fill="#fff" stroke="#000" stroke-width="0.7" shape-rendering="auto"/><path d="M5.5 9l4 -2v4l-4 2z" fill="#fff" stroke="#400000" stroke-width="0.7" shape-rendering="auto"/><circle cx="4" cy="13" r="2.2" fill="#000" shape-rendering="auto"/><circle cx="4" cy="13" r="0.8" fill="#fff" shape-rendering="auto"/><circle cx="11.5" cy="12" r="2" fill="#000" shape-rendering="auto"/><path d="M10 5l1 4M13 4l1 4" fill="none" stroke="#fff" stroke-width="1" shape-rendering="auto"/></svg>
<svg class="i" style="left:310px;top:49px;" width="16" height="16" viewBox="0 0 16 16" shape-rendering="crispEdges"><rect x="1" y="0" width="15" height="1.5" fill="#000"/><path d="M3.5 1.5h8l3 3v10h-11z" fill="#fff" stroke="#a0a0a0" stroke-width="1" /><rect x="14" y="4" width="1.5" height="11" fill="#000"/><rect x="4" y="14" width="11" height="1.5" fill="#000"/><rect x="4" y="3" width="1" height="1" fill="#0050c0"/><rect x="4" y="5" width="1" height="1" fill="#0050c0"/><rect x="4" y="7" width="1" height="1" fill="#0050c0"/><rect x="6" y="3" width="1" height="1" fill="#0050c0"/><rect x="6" y="5" width="1" height="1" fill="#0050c0"/><rect x="6" y="7" width="1" height="1" fill="#0050c0"/><rect x="8" y="3" width="1" height="1" fill="#0050c0"/><rect x="8" y="5" width="1" height="1" fill="#0050c0"/><rect x="8" y="7" width="1" height="1" fill="#0050c0"/><rect x="10" y="3" width="1" height="1" fill="#0050c0"/><rect x="10" y="5" width="1" height="1" fill="#0050c0"/><rect x="10" y="7" width="1" height="1" fill="#0050c0"/><rect x="12" y="3" width="1" height="1" fill="#0050c0"/><rect x="12" y="5" width="1" height="1" fill="#0050c0"/><rect x="12" y="7" width="1" height="1" fill="#0050c0"/><rect x="1" y="9" width="10" height="1" fill="#000"/><rect x="1" y="10" width="10" height="1" fill="#e0c000"/><rect x="1" y="11" width="10" height="1" fill="#000"/><rect x="1" y="12" width="10" height="1" fill="#e0c000"/><rect x="1" y="13" width="10" height="1" fill="#000"/></svg>
<svg class="i" style="left:333px;top:49px;" width="16" height="16" viewBox="0 0 16 16" shape-rendering="crispEdges"><rect x="0" y="0" width="16" height="1.5" fill="#000"/><rect x="1" y="1" width="14" height="13" fill="#fff"/><rect x="14" y="1" width="1.5" height="14" fill="#000"/><rect x="1" y="13.5" width="14" height="1.5" fill="#000"/><path d="M3 11.500l3 -3.500l2.500 2.500l4.500 -5.500v6.500z" fill="#fff4a0" shape-rendering="auto"/><path d="M2.5 10.5l3 -3.500l2.500 2.500l5.500 -7.500" fill="none" stroke="#f0b800" stroke-width="1.6" shape-rendering="auto"/><rect x="2" y="12" width="1" height="1" fill="#000"/><rect x="4" y="12" width="1" height="1" fill="#000"/><rect x="6" y="12" width="1" height="1" fill="#000"/><rect x="8" y="12" width="1" height="1" fill="#000"/><rect x="10" y="12" width="1" height="1" fill="#000"/><rect x="12" y="12" width="1" height="1" fill="#000"/><rect x="1" y="3" width="1" height="1" fill="#808080"/><rect x="1" y="5" width="1" height="1" fill="#808080"/><rect x="1" y="7" width="1" height="1" fill="#808080"/><rect x="1" y="9" width="1" height="1" fill="#808080"/><rect x="1" y="11" width="1" height="1" fill="#808080"/></svg>
<svg class="i" style="left:364px;top:49px;" width="16" height="16" viewBox="0 0 16 16" shape-rendering="crispEdges"><circle cx="8" cy="8" r="7.800" fill="#1030a0" shape-rendering="auto"/><path d="M1 5q3 0 5 3l2.500 -4q3 1 0 5q-1 4 -4 5q0 -4 -2 -5q-1 -1 -1.500 -4z" fill="#fff" shape-rendering="auto"/><path d="M11 3l3.500 2l-2.500 2.500z" fill="#e8e020" shape-rendering="auto"/><path d="M11 8.500l3.500 1l-2.500 4z" fill="#408040" shape-rendering="auto"/><path d="M2 12q3 3 7 3" fill="none" stroke="#203080" stroke-width="1" shape-rendering="auto"/></svg>
<svg class="i" style="left:387px;top:49px;" width="16" height="16" viewBox="0 0 16 16" shape-rendering="crispEdges"><path d="M3 3h12v13h-12z" fill="#000080" /><rect x="1" y="1" width="12" height="13" fill="#ffd000"/><rect x="1" y="0" width="12" height="2.5" fill="#000"/><text x="7" y="12" font-family="Liberation Sans,sans-serif" font-weight="bold" font-style="italic" font-size="9" text-anchor="middle" fill="#c04000">20</text></svg>
<svg class="i" style="left:418px;top:49px;" width="16" height="16" viewBox="0 0 16 16" shape-rendering="crispEdges"><rect x="0" y="0" width="16" height="9" fill="#607080"/><rect x="1" y="1" width="8" height="6" fill="#a0b0b0"/><rect x="0" y="9" width="16" height="2" fill="#000"/><rect x="1" y="11" width="2" height="5" fill="#000"/><rect x="13" y="11" width="2" height="5" fill="#303060"/><path d="M11 3l3 1v5l-4 3l-3 3h-2l4 -6z" fill="#e0e040" /><path d="M5 15l4 -5l3 -1l-2 4l-3 2z" fill="#2040c0" /><circle cx="12.5" cy="2.5" r="1.8" fill="#f0d0a0"/></svg>
<div class="sepv" style="left:81px;top:46px;width:2px;height:23px;"></div>
<div class="sepv" style="left:158px;top:46px;width:2px;height:23px;"></div>
<div class="sepv" style="left:258px;top:46px;width:2px;height:23px;"></div>
<div class="sepv" style="left:358px;top:46px;width:2px;height:23px;"></div>
<div class="sepv" style="left:412px;top:46px;width:2px;height:23px;"></div>
<!-- part_w1 -->
<div class="win" style="left:64px;top:140px;width:656px;height:378px;"><div style="left:-1px;top:-1px"><div class="ti" style="left:4px;top:4px;width:647px;height:18px;"></div>
<div style="left:4px;top:23px;width:647px;height:1px;background:#fff"></div>
<svg class="i" style="left:6px;top:5px;" width="16" height="16" viewBox="0 0 16 16" shape-rendering="crispEdges"><rect x="3" y="0" width="12" height="10" fill="#000080"/><rect x="2" y="2" width="12" height="10" fill="#000080"/><rect x="0" y="3" width="13" height="12" fill="#000080"/><rect x="1" y="5" width="11" height="2" fill="#ff80c0"/><rect x="1" y="8" width="11" height="6" fill="#fff"/><rect x="2" y="11" width="9" height="2" fill="#000080"/><rect x="1" y="4" width="3" height="1" fill="#fff"/><rect x="6" y="4" width="2" height="1" fill="#fff"/></svg>
<div class="t" style="top:7.49px;font-size:11px;line-height:13px;left:24px;font-weight:bold;color:#d4d0c8;letter-spacing:0.58px;">Номенклатура</div>
<div class="btn" style="left:600px;top:6px;width:16px;height:14px;"><div style="left:3px;top:8px;width:6px;height:2px;background:#000"></div>
</div>
<div class="btn" style="left:616px;top:6px;width:16px;height:14px;"><div style="left:2px;top:1px;width:9px;height:9px;border:1px solid #000;border-top-width:2px"></div>
</div>
<div class="btn" style="left:634px;top:6px;width:16px;height:14px;"><svg class="i" style="left:3px;top:2px;shape-rendering:auto" width="8" height="7" viewBox="0 0 8 7" shape-rendering="crispEdges"><path d="M0 0h2l2 2l2 -2h2l-3 3.5l3 3.5h-2l-2 -2l-2 2h-2l3 -3.5z" fill="#000" /></svg>
</div>
<div style="left:355px;top:27px;width:22px;height:22px;border:1px solid;border-color:#808080 #fff #fff #808080;background:#e9e7e3"></div>
<svg class="i" style="left:12px;top:29px;" width="16" height="16" viewBox="0 0 16 16" shape-rendering="crispEdges"><rect x="3" y="3" width="12" height="10" fill="#000080"/><rect x="5" y="4" width="1" height="1" fill="#b0b0ff"/><rect x="8" y="4" width="1" height="1" fill="#b0b0ff"/><rect x="11" y="4" width="1" height="1" fill="#b0b0ff"/><rect x="4" y="6" width="10" height="2" fill="#fff"/><rect x="6.5" y="6" width="1" height="2" fill="#000080"/><rect x="10.5" y="6" width="1" height="2" fill="#000080"/><rect x="4" y="10" width="10" height="2" fill="#fff"/><rect x="6.5" y="10" width="1" height="2" fill="#000080"/><rect x="10.5" y="10" width="1" height="2" fill="#000080"/><path d="M0.5 0.5l5 5M5.5 0.5l-5 5M3 0v6M0 3h6" fill="none" stroke="#e8e800" stroke-width="1" shape-rendering="auto"/></svg>
<svg class="i" style="left:36px;top:29px;" width="16" height="16" viewBox="0 0 16 16" shape-rendering="crispEdges"><path d="M1.5 5.5v-2h4l1 1.5h7.500v8.500h-12.500z" fill="#ffff80" stroke="#a0a040" stroke-width="1" /><rect x="2" y="14" width="13" height="1" fill="#000"/><rect x="14" y="6" width="1" height="8" fill="#000"/></svg>
<svg class="i" style="left:58px;top:29px;" width="16" height="16" viewBox="0 0 16 16" shape-rendering="crispEdges"><rect x="1" y="4" width="11" height="10" fill="#000080"/><rect x="3" y="5" width="1" height="1" fill="#b0b0ff"/><rect x="6" y="5" width="1" height="1" fill="#b0b0ff"/><rect x="9" y="5" width="1" height="1" fill="#b0b0ff"/><rect x="2" y="7" width="9" height="2" fill="#fff"/><rect x="4.5" y="7" width="1" height="2" fill="#000080"/><rect x="7.5" y="7" width="1" height="2" fill="#000080"/><rect x="2" y="11" width="9" height="2" fill="#fff"/><rect x="4.5" y="11" width="1" height="2" fill="#000080"/><rect x="7.5" y="11" width="1" height="2" fill="#000080"/><path d="M14 0.5l1.500 1l-5 9.500l-2 1.500l0.500 -2.500z" fill="#ffff40" stroke="#000" stroke-width="0.8" shape-rendering="auto"/></svg>
<svg class="i" style="left:82px;top:29px;" width="16" height="16" viewBox="0 0 16 16" shape-rendering="crispEdges"><rect x="6" y="8" width="10" height="10" fill="#000080"/><rect x="8" y="9" width="1" height="1" fill="#b0b0ff"/><rect x="11" y="9" width="1" height="1" fill="#b0b0ff"/><rect x="14" y="9" width="1" height="1" fill="#b0b0ff"/><rect x="7" y="11" width="8" height="2" fill="#fff"/><rect x="9.5" y="11" width="1" height="2" fill="#000080"/><rect x="11.5" y="11" width="1" height="2" fill="#000080"/><rect x="7" y="15" width="8" height="2" fill="#fff"/><rect x="9.5" y="15" width="1" height="2" fill="#000080"/><rect x="11.5" y="15" width="1" height="2" fill="#000080"/><rect x="6" y="16" width="10" height="0" fill="#fff"/><circle cx="10" cy="5.5" r="4.2" fill="#40e0e0" stroke="#003838" shape-rendering="auto"/><path d="M6.500 9l-5 6" fill="none" stroke="#000" stroke-width="2" shape-rendering="auto"/><path d="M8 5h4M8.500 7h3" fill="none" stroke="#007070" stroke-width="1" /></svg>
<svg class="i" style="left:105px;top:29px;" width="16" height="16" viewBox="0 0 16 16" shape-rendering="crispEdges"><rect x="0" y="1" width="12" height="10" fill="#000080"/><rect x="2" y="2" width="1" height="1" fill="#b0b0ff"/><rect x="5" y="2" width="1" height="1" fill="#b0b0ff"/><rect x="8" y="2" width="1" height="1" fill="#b0b0ff"/><rect x="1" y="4" width="10" height="2" fill="#fff"/><rect x="3.5" y="4" width="1" height="2" fill="#000080"/><rect x="7.5" y="4" width="1" height="2" fill="#000080"/><rect x="1" y="8" width="10" height="2" fill="#fff"/><rect x="3.5" y="8" width="1" height="2" fill="#000080"/><rect x="7.5" y="8" width="1" height="2" fill="#000080"/><rect x="11" y="13" width="5" height="1" fill="#000"/><rect x="13" y="11" width="1" height="5" fill="#000"/></svg>
<svg class="i" style="left:128px;top:29px;" width="16" height="16" viewBox="0 0 16 16" shape-rendering="crispEdges"><rect x="0" y="1" width="12" height="10" fill="#000080"/><rect x="2" y="2" width="1" height="1" fill="#b0b0ff"/><rect x="5" y="2" width="1" height="1" fill="#b0b0ff"/><rect x="8" y="2" width="1" height="1" fill="#b0b0ff"/><rect x="1" y="4" width="10" height="2" fill="#fff"/><rect x="3.5" y="4" width="1" height="2" fill="#000080"/><rect x="7.5" y="4" width="1" height="2" fill="#000080"/><rect x="1" y="8" width="10" height="2" fill="#fff"/><rect x="3.5" y="8" width="1" height="2" fill="#000080"/><rect x="7.5" y="8" width="1" height="2" fill="#000080"/><path d="M8 8.500l7 7M15 8.500l-7 7" fill="none" stroke="#c00000" stroke-width="1.7" shape-rendering="auto"/></svg>
<svg class="i" style="left:152px;top:29px;" width="16" height="16" viewBox="0 0 16 16" shape-rendering="crispEdges"><rect x="0" y="1" width="12" height="10" fill="#a0a0a0"/><rect x="2" y="2" width="1" height="1" fill="#e0e0e0"/><rect x="5" y="2" width="1" height="1" fill="#e0e0e0"/><rect x="8" y="2" width="1" height="1" fill="#e0e0e0"/><rect x="1" y="4" width="10" height="2" fill="#ececec"/><rect x="3.5" y="4" width="1" height="2" fill="#a0a0a0"/><rect x="7.5" y="4" width="1" height="2" fill="#a0a0a0"/><rect x="1" y="8" width="10" height="2" fill="#ececec"/><rect x="3.5" y="8" width="1" height="2" fill="#a0a0a0"/><rect x="7.5" y="8" width="1" height="2" fill="#a0a0a0"/><rect x="7" y="7" width="9" height="9" fill="#808080"/><rect x="9" y="8" width="5" height="3" fill="#e8e8e8"/><rect x="10" y="13" width="3" height="3" fill="#d0d0d0"/><rect x="8" y="16" width="9" height="0" fill="#fff"/></svg>
<svg class="i" style="left:173px;top:29px;" width="16" height="16" viewBox="0 0 16 16" shape-rendering="crispEdges"><rect x="2" y="3" width="3" height="2" fill="#e0c000"/><path d="M5 1l3 3l-3 3z" fill="#e0c000" /><rect x="2" y="7" width="4" height="2" fill="#0000c0"/><path d="M6 5l3 3l-3 3z" fill="#0000c0" /><rect x="2" y="12" width="4" height="2" fill="#c00000"/><path d="M6 10l3 3l-3 3z" fill="#c00000" /><rect x="9" y="7" width="4" height="2" fill="#0000c0"/><path d="M13 5l3 3l-3 3z" fill="#0000c0" /><rect x="1" y="1" width="1" height="14" fill="#000"/></svg>
<svg class="i" style="left:196px;top:29px;" width="16" height="16" viewBox="0 0 16 16" shape-rendering="crispEdges"><rect x="2" y="3" width="3" height="2" fill="#e0c000"/><path d="M5 1l3 3l-3 3z" fill="#e0c000" /><rect x="2" y="7" width="4" height="2" fill="#0000c0"/><path d="M6 5l3 3l-3 3z" fill="#0000c0" /><rect x="2" y="12" width="4" height="2" fill="#c00000"/><path d="M6 10l3 3l-3 3z" fill="#c00000" /><rect x="1" y="1" width="1" height="14" fill="#000"/><path d="M9.5 15.5v-5l1.500 -1v-4l1.500 -0.500l1 4l2 2v4.500z" fill="#ffe8b0" stroke="#000" stroke-width="0.8" shape-rendering="auto"/></svg>
<svg class="i" style="left:220px;top:29px;" width="16" height="16" viewBox="0 0 16 16" shape-rendering="crispEdges"><path d="M5.5 1.5h9v8h-9zM3.5 3.5h9v8h-9zM1.5 5.5h9v8h-9z" fill="#d4d0c8" stroke="#808080" stroke-width="1" /><rect x="3" y="9" width="5" height="1" fill="#808080"/><path d="M7 7l3 2.5l-3 2.5z" fill="#808080" /><rect x="2" y="14" width="10" height="1" fill="#fff"/></svg>
<svg class="i" style="left:243px;top:29px;" width="16" height="16" viewBox="0 0 16 16" shape-rendering="crispEdges"><rect x="1" y="4" width="4" height="2" fill="#808080"/><path d="M5 2l3 3l-3 3z" fill="#808080" /><rect x="1" y="8" width="4" height="2" fill="#808080"/><path d="M5 6l3 3l-3 3z" fill="#808080" /><rect x="1" y="12" width="4" height="2" fill="#808080"/><path d="M5 10l3 3l-3 3z" fill="#808080" /><path d="M8 8h4M11 5l4 3l-4 3" fill="#808080" stroke="#808080" stroke-width="1" /><rect x="2" y="15" width="8" height="1" fill="#fff"/></svg>
<svg class="i" style="left:266px;top:29px;" width="16" height="16" viewBox="0 0 16 16" shape-rendering="crispEdges"><path d="M2 2l4 3M8 2l-3 5M5 7l6 3M11 6l-2 6M9 12l5 1M3 4l3 6" fill="none" stroke="#808080" stroke-width="1.5" /><path d="M3 3l4 3M9 3l-3 5M6 8l6 3M12 7l-2 6" fill="none" stroke="#fff" stroke-width="0.6" /></svg>
<svg class="i" style="left:289px;top:29px;" width="16" height="16" viewBox="0 0 16 16" shape-rendering="crispEdges"><path d="M1.5 1.5h6v9h-6z" fill="#e0e0e0" stroke="#808080" stroke-width="1" /><path d="M5.5 4.5h5l3 3v7h-8z" fill="#808080" stroke="#808080" stroke-width="1" /><rect x="2" y="3" width="4" height="1" fill="#808080"/></svg>
<svg class="i" style="left:312px;top:29px;" width="16" height="16" viewBox="0 0 16 16" shape-rendering="crispEdges"><path d="M2.5 2.5h8l3 3v10h-11z" fill="#fff" stroke="#000" stroke-width="1" /><path d="M10.5 2.5v3h3" fill="none" stroke="#000" stroke-width="1" /><rect x="2" y="2" width="1" height="13" fill="#c0c080"/><rect x="2" y="2" width="8" height="1" fill="#c0c080"/><path d="M5.5 5v8h4M5.5 9.500h4M5.5 6.500h3" fill="none" stroke="#000" stroke-width="1" /></svg>
<svg class="i" style="left:334px;top:29px;" width="16" height="16" viewBox="0 0 16 16" shape-rendering="crispEdges"><path d="M1.5 1.5h7l3 3v9h-10z" fill="#fff" stroke="#000" stroke-width="1" /><rect x="3" y="4" width="4" height="1" fill="#000"/><rect x="3" y="6" width="2" height="1" fill="#000"/><path d="M9 4l3 -2" fill="none" stroke="#000" stroke-width="1" /><path d="M8 8h-3l3 -3M5 8l3 3" fill="none" stroke="#0000c0" stroke-width="1.5" /><rect x="6" y="9" width="10" height="6" fill="#000"/><rect x="8" y="10" width="7" height="2" fill="#fff"/><rect x="7" y="13" width="8" height="1" fill="#6080ff"/><rect x="8" y="7" width="8" height="2" fill="#0000c0"/></svg>
<svg class="i" style="left:358px;top:29px;" width="16" height="16" viewBox="0 0 16 16" shape-rendering="crispEdges"><rect x="2" y="1" width="1" height="13" fill="#000"/><rect x="2" y="3" width="3" height="1" fill="#000"/><rect x="2" y="8" width="3" height="1" fill="#000"/><rect x="2" y="13" width="3" height="1" fill="#000"/><rect x="5" y="1" width="6" height="3" fill="#ffff00"/><rect x="5" y="6" width="5" height="3" fill="#ffff00"/><rect x="8" y="9" width="1" height="5" fill="#000"/><rect x="8" y="10" width="3" height="1" fill="#000"/><rect x="8" y="13" width="3" height="1" fill="#000"/><rect x="11" y="9" width="5" height="2" fill="#ffff00"/><rect x="11" y="12" width="5" height="3" fill="#00c0c0"/><rect x="5" y="12" width="3" height="2" fill="#00c0c0"/><path d="M5.5 1.5h5M5.5 6.5h5" fill="none" stroke="#808000" stroke-width="1" /></svg>
<svg class="i" style="left:380px;top:29px;" width="16" height="16" viewBox="0 0 16 16" shape-rendering="crispEdges"><rect x="0" y="0" width="11" height="11" fill="#004040"/><rect x="1" y="3" width="9" height="7" fill="#40e0e0"/><rect x="4" y="1" width="1" height="10" fill="#004040"/><rect x="7" y="1" width="1" height="10" fill="#004040"/><rect x="1" y="1" width="9" height="1" fill="#80ffff"/><rect x="4" y="12" width="12" height="4" fill="#80e0e0"/><rect x="6" y="11" width="1" height="5" fill="#008080"/><rect x="9" y="11" width="1" height="5" fill="#008080"/><rect x="12" y="11" width="1" height="5" fill="#008080"/><rect x="15" y="11" width="1" height="5" fill="#008080"/><path d="M2 12v2h4M4 12l2 2l-2 2" fill="none" stroke="#e00000" stroke-width="1.2" /></svg>
<svg class="i" style="left:404px;top:29px;" width="16" height="16" viewBox="0 0 16 16" shape-rendering="crispEdges"><path d="M2.5 1.5h8l3 3v10h-11z" fill="#fff" stroke="#000" stroke-width="1" /><path d="M10.5 1.5v3h3" fill="none" stroke="#000" stroke-width="1" /><rect x="2" y="1" width="1" height="13" fill="#d8d890"/><rect x="2" y="1" width="8" height="1" fill="#d8d890"/><text x="7.800" y="13" font-family="Liberation Sans,sans-serif" font-weight="bold" font-size="11.5" text-anchor="middle" fill="#000040" shape-rendering="auto">?</text></svg>
<svg class="i" style="left:427px;top:29px;" width="16" height="16" viewBox="0 0 16 16" shape-rendering="crispEdges"><path d="M1.5 1v12l3 -3l2 5l2 -1l-2 -5h4z" fill="#fff" stroke="#000" stroke-width="1" shape-rendering="auto"/><path d="M2 2v9l2 -2z" fill="#000" shape-rendering="auto"/><text x="12.500" y="10" font-family="Liberation Sans,sans-serif" font-weight="bold" font-size="10.5" text-anchor="middle" fill="#000080" shape-rendering="auto">?</text></svg>
<div class="panel" style="left:4px;top:52px;width:648px;height:324px;"></div>
<div class="t" style="top:59.22px;font-size:12.5px;line-height:14.5px;left:12px;font-weight:bold;color:#000080;">Грибок, липа, класс А, 2,2м</div>
<div class="sunk" style="left:13px;top:76px;width:187px;height:264px;"><div style="left:5px;top:4px;width:9px;height:9px;border:1px solid #808080;background:#fff"><div style="left:1px;top:3px;width:5px;height:1px;background:#000"></div>
<div style="left:3px;top:1px;width:1px;height:5px;background:#000"></div>
</div>
<div style="left:14px;top:8px;width:7px;height:1px;border-top:1px dotted #808080"></div>
<svg class="i" style="left:21px;top:2px;" width="16" height="14" viewBox="0 0 16 14" shape-rendering="crispEdges"><path d="M0.5 1.5h5l1 1.5h8v9h-14z" fill="#ffff80" stroke="#808040" stroke-width="1" /><rect x="1" y="12" width="15" height="1" fill="#404040"/></svg>
<div style="left:39px;top:1px;width:79px;height:16px;background:#d4d0c8"></div>
<div class="t" style="top:2.49px;font-size:11px;line-height:13px;left:41.4px;transform:scaleY(1.13);transform-origin:0 10.31px;">Номенклатура</div>
</div>
<div style="left:208px;top:77px;width:434px;height:262px;overflow:hidden"><div style="left:0px;top:0px;width:434px;height:262px;background:#d4d0c8"></div>
<div style="left:1px;top:1px;width:21px;height:14px;border-top:1px solid #fff;border-left:1px solid #fff;"></div>
<div style="left:1px;top:14px;width:22px;height:1px;background:#000"></div>
<div style="left:24px;top:1px;width:52px;height:14px;border-top:1px solid #fff;border-left:1px solid #fff;"></div>
<div style="left:24px;top:14px;width:53px;height:1px;background:#000"></div>
<div style="left:78px;top:1px;width:169px;height:14px;border-top:1px solid #fff;border-left:1px solid #fff;"></div>
<div style="left:78px;top:14px;width:170px;height:1px;background:#000"></div>
<div style="left:249px;top:1px;width:168px;height:14px;border-top:1px solid #fff;border-left:1px solid #fff;"></div>
<div style="left:249px;top:14px;width:169px;height:1px;background:#000"></div>
<div class="t" style="top:2.49px;font-size:11px;line-height:13px;left:26.7px;font-weight:bold;letter-spacing:0.5px;transform:scaleY(1.13);transform-origin:0 10.31px;">Код</div>
<div class="t" style="top:2.49px;font-size:11px;line-height:13px;left:80px;font-weight:bold;letter-spacing:0.5px;transform:scaleY(1.13);transform-origin:0 10.31px;">Наименование</div>
<div class="t" style="top:2.49px;font-size:11px;line-height:13px;left:251.6px;font-weight:bold;letter-spacing:0.5px;transform:scaleY(1.13);transform-origin:0 10.31px;">Основное свойство</div>
<div style="left:0px;top:16px;width:417px;height:1px;background:#000"></div>
<div style="left:0px;top:31px;width:417px;height:1px;background:#000"></div>
<div style="left:0px;top:46px;width:417px;height:1px;background:#000"></div>
<div style="left:0px;top:61px;width:417px;height:1px;background:#000"></div>
<div style="left:0px;top:76px;width:417px;height:1px;background:#000"></div>
<div style="left:0px;top:91px;width:417px;height:1px;background:#000"></div>
<div style="left:0px;top:106px;width:417px;height:1px;background:#000"></div>
<div style="left:0px;top:121px;width:417px;height:1px;background:#000"></div>
<div style="left:0px;top:136px;width:417px;height:1px;background:#000"></div>
<div style="left:0px;top:151px;width:417px;height:1px;background:#000"></div>
<div style="left:0px;top:166px;width:417px;height:1px;background:#000"></div>
<div style="left:0px;top:181px;width:417px;height:1px;background:#000"></div>
<div style="left:0px;top:196px;width:417px;height:1px;background:#000"></div>
<div style="left:0px;top:211px;width:417px;height:1px;background:#000"></div>
<div style="left:0px;top:226px;width:417px;height:1px;background:#000"></div>
<div style="left:0px;top:241px;width:417px;height:1px;background:#000"></div>
<div style="left:0px;top:256px;width:417px;height:1px;background:#000"></div>
<div style="left:0px;top:0px;width:1px;height:262px;background:#000"></div>
<div style="left:21px;top:0px;width:1px;height:262px;background:#000"></div>
<div style="left:23px;top:0px;width:1px;height:262px;background:#000"></div>
<div style="left:75px;top:0px;width:1px;height:262px;background:#000"></div>
<div style="left:77px;top:0px;width:1px;height:262px;background:#000"></div>
<div style="left:246px;top:0px;width:1px;height:262px;background:#000"></div>
<div style="left:248px;top:0px;width:1px;height:262px;background:#000"></div>
<div style="left:0px;top:0px;width:434px;height:1px;background:#000"></div>
<svg class="i" style="left:3px;top:17px;" width="16" height="14" viewBox="0 1 16 14" shape-rendering="crispEdges"><path d="M1.5 4.500q0 -2 2.500 -2q2.500 0 2.500 2h7.500v8.500h-12.500z" fill="#e8e870" stroke="#404000" stroke-width="1" shape-rendering="auto"/><path d="M2.500 13.500l1 -6.500h12l-2 6.500z" fill="#ffff80" stroke="#404000" stroke-width="1" shape-rendering="auto"/></svg>
<div style="left:24px;top:17px;width:51px;height:14px;overflow:hidden"><div class="t" style="top:0.99px;font-size:11px;line-height:13px;left:2.7px;transform:scaleY(1.13);transform-origin:0 10.31px;">00001289</div>
</div>
<div class="t" style="top:17.99px;font-size:11px;line-height:13px;left:80.6px;transform:scaleY(1.13);transform-origin:0 10.31px;">Липа</div>
<svg class="i" style="left:3px;top:32px;" width="16" height="14" viewBox="0 1 16 14" shape-rendering="crispEdges"><path d="M1.5 4.500q0 -2 2.500 -2q2.500 0 2.500 2h7.500v8.500h-12.500z" fill="#e8e870" stroke="#404000" stroke-width="1" shape-rendering="auto"/><path d="M2.500 13.500l1 -6.500h12l-2 6.500z" fill="#ffff80" stroke="#404000" stroke-width="1" shape-rendering="auto"/></svg>
<div style="left:24px;top:32px;width:51px;height:14px;overflow:hidden"><div class="t" style="top:0.99px;font-size:11px;line-height:13px;left:2.7px;transform:scaleY(1.13);transform-origin:0 10.31px;">00000517</div>
</div>
<div class="t" style="top:32.99px;font-size:11px;line-height:13px;left:80.6px;transform:scaleY(1.13);transform-origin:0 10.31px;">Грибок, липа</div>
<svg class="i" style="left:5px;top:47px;" width="9" height="14" viewBox="0 1 9 14" shape-rendering="crispEdges"><path d="M1 2q3 -2 6 0v11h-6z" fill="#e0ffff" stroke="#406060" stroke-width="1" shape-rendering="auto"/><rect x="2" y="13" width="6" height="1" fill="#008080"/></svg>
<svg class="i" style="left:5px;top:62px;" width="9" height="14" viewBox="0 1 9 14" shape-rendering="crispEdges"><path d="M1 2q3 -2 6 0v11h-6z" fill="#e0ffff" stroke="#406060" stroke-width="1" shape-rendering="auto"/><rect x="2" y="13" width="6" height="1" fill="#008080"/></svg>
<svg class="i" style="left:5px;top:77px;" width="9" height="14" viewBox="0 1 9 14" shape-rendering="crispEdges"><path d="M1 2q3 -2 6 0v11h-6z" fill="#e0ffff" stroke="#406060" stroke-width="1" shape-rendering="auto"/><rect x="2" y="13" width="6" height="1" fill="#008080"/></svg>
<svg class="i" style="left:5px;top:92px;" width="9" height="14" viewBox="0 1 9 14" shape-rendering="crispEdges"><path d="M1 2q3 -2 6 0v11h-6z" fill="#e0ffff" stroke="#406060" stroke-width="1" shape-rendering="auto"/><rect x="2" y="13" width="6" height="1" fill="#008080"/></svg>
<svg class="i" style="left:5px;top:107px;" width="9" height="14" viewBox="0 1 9 14" shape-rendering="crispEdges"><path d="M1 2q3 -2 6 0v11h-6z" fill="#e0ffff" stroke="#406060" stroke-width="1" shape-rendering="auto"/><rect x="2" y="13" width="6" height="1" fill="#008080"/></svg>
<svg class="i" style="left:5px;top:122px;" width="9" height="14" viewBox="0 1 9 14" shape-rendering="crispEdges"><path d="M1 2q3 -2 6 0v11h-6z" fill="#e0ffff" stroke="#406060" stroke-width="1" shape-rendering="auto"/><rect x="2" y="13" width="6" height="1" fill="#008080"/></svg>
<svg class="i" style="left:5px;top:137px;" width="9" height="14" viewBox="0 1 9 14" shape-rendering="crispEdges"><path d="M1 2q3 -2 6 0v11h-6z" fill="#e0ffff" stroke="#406060" stroke-width="1" shape-rendering="auto"/><rect x="2" y="13" width="6" height="1" fill="#008080"/></svg>
<svg class="i" style="left:5px;top:152px;" width="9" height="14" viewBox="0 1 9 14" shape-rendering="crispEdges"><path d="M1 2q3 -2 6 0v11h-6z" fill="#e0ffff" stroke="#406060" stroke-width="1" shape-rendering="auto"/><rect x="2" y="13" width="6" height="1" fill="#008080"/></svg>
<svg class="i" style="left:5px;top:167px;" width="9" height="14" viewBox="0 1 9 14" shape-rendering="crispEdges"><path d="M1 2q3 -2 6 0v11h-6z" fill="#e0ffff" stroke="#406060" stroke-width="1" shape-rendering="auto"/><rect x="2" y="13" width="6" height="1" fill="#008080"/></svg>
<svg class="i" style="left:5px;top:182px;" width="9" height="14" viewBox="0 1 9 14" shape-rendering="crispEdges"><path d="M1 2q3 -2 6 0v11h-6z" fill="#e0ffff" stroke="#406060" stroke-width="1" shape-rendering="auto"/><rect x="2" y="13" width="6" height="1" fill="#008080"/></svg>
<svg class="i" style="left:5px;top:197px;" width="9" height="14" viewBox="0 1 9 14" shape-rendering="crispEdges"><path d="M1 2q3 -2 6 0v11h-6z" fill="#e0ffff" stroke="#406060" stroke-width="1" shape-rendering="auto"/><rect x="2" y="13" width="6" height="1" fill="#008080"/></svg>
<svg class="i" style="left:5px;top:212px;" width="9" height="14" viewBox="0 1 9 14" shape-rendering="crispEdges"><path d="M1 2q3 -2 6 0v11h-6z" fill="#e0ffff" stroke="#406060" stroke-width="1" shape-rendering="auto"/><rect x="2" y="13" width="6" height="1" fill="#008080"/></svg>
<svg class="i" style="left:5px;top:227px;" width="9" height="14" viewBox="0 1 9 14" shape-rendering="crispEdges"><path d="M1 2q3 -2 6 0v11h-6z" fill="#e0ffff" stroke="#406060" stroke-width="1" shape-rendering="auto"/><rect x="2" y="13" width="6" height="1" fill="#008080"/></svg>
<div style="left:417px;top:1px;width:16px;height:262px;background:repeating-conic-gradient(#fff 0 25%,#d4d0c8 0 50%) 0 0/2px 2px"></div>
<div class="btn" style="left:418px;top:1px;width:15px;height:15px;"><svg class="i" style="left:3px;top:4px;" width="7" height="4" viewBox="0 0 7 4" shape-rendering="crispEdges"><path d="M0 4h7l-3.5 -4z" fill="#000" /></svg>
</div>
<div style="left:433px;top:0px;width:1px;height:262px;background:#fff"></div>
</div>
<div class="btn c" style="left:12px;top:347px;width:81px;height:21px;"><div class="t" style="top:3.89px;font-size:11px;line-height:13px;left:0px;transform:scaleY(1.13);transform-origin:0 10.31px;width:100%;text-align:center"><u>З</u>акрыть</div>
</div>
<div class="btn" style="left:96px;top:347px;width:17px;height:21px;"><svg class="i" style="left:4px;top:8px;" width="7" height="4" viewBox="0 0 7 4" shape-rendering="crispEdges"><path d="M0 0h7l-3.5 4z" fill="#000" /></svg>
</div>
<div class="btn c" style="left:113px;top:347px;width:81px;height:21px;"><div class="t" style="top:3.89px;font-size:11px;line-height:13px;left:0px;transform:scaleY(1.13);transform-origin:0 10.31px;width:100%;text-align:center">Прайс</div>
</div>
<div class="btn" style="left:197px;top:347px;width:81px;height:21px;"></div>
</div></div>
<div style="left:108px;top:519px;width:172px;height:1px;background:#e8e8e8"></div>
<div style="left:108px;top:520px;width:172px;height:1px;background:#a0a0a0"></div>
<!-- part_w3 -->
<div class="win" style="left:719px;top:179px;width:481px;height:396px;"><div style="left:-1px;top:-1px"><div class="ti" style="left:3px;top:4px;width:474px;height:18px;"></div>
<div style="left:3px;top:23px;width:474px;height:1px;background:#fff"></div>
<svg class="i" style="left:7px;top:7px;" width="12" height="13" viewBox="0 0 13 15" shape-rendering="crispEdges"><path d="M0.5 0.5h9l3 3v11h-12z" fill="#fff" stroke="#000" stroke-width="1" /><text x="5" y="11" font-family="Liberation Serif,serif" font-weight="bold" font-size="12" text-anchor="middle" fill="#000">Σ</text><rect x="9" y="12" width="3" height="1" fill="#008000"/><rect x="10" y="11" width="1" height="3" fill="#008000"/></svg>
<div class="t" style="top:7.49px;font-size:11px;line-height:13px;left:23px;font-weight:bold;color:#d4d0c8;letter-spacing:0.47px;">E:\1c выгрузки ТМЦ\!!!Ostatki tovarov dlja torgovli.ert</div>
<div class="btn" style="left:425px;top:6px;width:16px;height:14px;"><div style="left:3px;top:8px;width:6px;height:2px;background:#000"></div>
</div>
<div class="btn" style="left:441px;top:6px;width:16px;height:14px;"><div style="left:2px;top:1px;width:9px;height:9px;border:1px solid #000;border-top-width:2px"></div>
</div>
<div class="btn" style="left:459px;top:6px;width:16px;height:14px;"><svg class="i" style="left:3px;top:2px;shape-rendering:auto" width="8" height="7" viewBox="0 0 8 7" shape-rendering="crispEdges"><path d="M0 0h2l2 2l2 -2h2l-3 3.5l3 3.5h-2l-2 -2l-2 2h-2l3 -3.5z" fill="#000" /></svg>
</div>
<svg class="i" style="left:12px;top:30px;" width="16" height="16" viewBox="0 0 16 16" shape-rendering="crispEdges"><rect x="1" y="9" width="7" height="6" fill="#000"/><rect x="2" y="10" width="5" height="4" fill="#fff"/><rect x="3" y="11" width="1" height="1" fill="#000"/><rect x="5" y="11" width="1" height="1" fill="#000"/><path d="M3 8q0 -5 5 -5q3 0 4 3" fill="none" stroke="#000" stroke-width="1.3" shape-rendering="auto"/><path d="M1 5l2 4l3 -3z" fill="#000080" /><path d="M9 15l3.5 -6l3.5 6z" fill="#000" /></svg>
<svg class="i" style="left:35px;top:30px;" width="16" height="16" viewBox="0 0 16 16" shape-rendering="crispEdges"><rect x="1" y="9" width="7" height="6" fill="#000"/><rect x="2" y="10" width="5" height="4" fill="#fff"/><rect x="3" y="11" width="1" height="1" fill="#000"/><rect x="5" y="11" width="1" height="1" fill="#000"/><path d="M3 8q1 -5 6 -5q3 0 4 3" fill="none" stroke="#000" stroke-width="1.3" shape-rendering="auto"/><path d="M15 4l-1 5l-4 -3z" fill="#000080" /><path d="M9 15l3.5 -6l3.5 6z" fill="#000" /></svg>
<svg class="i" style="left:58px;top:30px;" width="16" height="16" viewBox="0 0 16 16" shape-rendering="crispEdges"><path d="M2.5 1.5h8l3 3v10h-11z" fill="#fff" stroke="#000" stroke-width="1" /><path d="M10.5 1.5v3h3" fill="none" stroke="#000" stroke-width="1" /><rect x="2" y="1" width="1" height="13" fill="#d8d890"/><rect x="2" y="1" width="8" height="1" fill="#d8d890"/><text x="7.800" y="13" font-family="Liberation Sans,sans-serif" font-weight="bold" font-size="11.5" text-anchor="middle" fill="#000040" shape-rendering="auto">?</text></svg>
<svg class="i" style="left:81px;top:30px;" width="16" height="16" viewBox="0 0 16 16" shape-rendering="crispEdges"><path d="M1.5 1v12l3 -3l2 5l2 -1l-2 -5h4z" fill="#fff" stroke="#000" stroke-width="1" shape-rendering="auto"/><path d="M2 2v9l2 -2z" fill="#000" shape-rendering="auto"/><text x="12.500" y="10" font-family="Liberation Sans,sans-serif" font-weight="bold" font-size="10.5" text-anchor="middle" fill="#000080" shape-rendering="auto">?</text></svg>
<div class="panel" style="left:4px;top:52px;width:473px;height:340px;"></div>
<div class="t" style="top:65.62px;font-size:20.3px;line-height:22.3px;left:116px;font-weight:bold;color:#0000cc;">Остатки товаров на дату</div>
<div class="grp2" style="left:101px;top:98px;width:310px;height:64px;"></div>
<svg class="i" style="left:210px;top:109px;shape-rendering:auto" width="12" height="12" viewBox="0 0 12 12" shape-rendering="crispEdges"><circle cx="6" cy="6" r="5.5" fill="#fff" stroke="#808080"/><path d="M2 10a5.5 5.5 0 0 0 8 -8" fill="none" stroke="#fff" stroke-width="1"/><path d="M2.2 9.8a5.3 5.3 0 0 1 7.6 -7.6" fill="none" stroke="#404040" stroke-width="1"/></svg>
<div class="t" style="top:110.29px;font-size:11px;line-height:13px;left:226.8px;letter-spacing:-0.55px;transform:scaleY(1.13);transform-origin:0 10.31px;">Юр лицо</div>
<svg class="i" style="left:303px;top:109px;shape-rendering:auto" width="12" height="12" viewBox="0 0 12 12" shape-rendering="crispEdges"><circle cx="6" cy="6" r="5.5" fill="#fff" stroke="#808080"/><path d="M2 10a5.5 5.5 0 0 0 8 -8" fill="none" stroke="#fff" stroke-width="1"/><path d="M2.2 9.8a5.3 5.3 0 0 1 7.6 -7.6" fill="none" stroke="#404040" stroke-width="1"/></svg>
<div class="t" style="top:110.29px;font-size:11px;line-height:13px;left:320.5px;transform:scaleY(1.13);transform-origin:0 10.31px;">Упр. аналитика</div>
<div class="sunk g" style="left:149px;top:134px;width:220px;height:20px;"></div>
<div class="btn k" style="left:369px;top:134px;width:16px;height:20px;"><svg class="i" style="left:3px;top:10px;" width="8" height="2" viewBox="0 0 8 2" shape-rendering="crispEdges"><rect x="0" y="0" width="2" height="2" fill="#000"/><rect x="3" y="0" width="2" height="2" fill="#000"/><rect x="6" y="0" width="2" height="2" fill="#000"/></svg>
</div>
<div class="btn" style="left:388px;top:134px;width:17px;height:20px;"><svg class="i" style="left:3px;top:4.5px;shape-rendering:auto" width="9" height="9" viewBox="0 0 9 9" shape-rendering="crispEdges"><path d="M0.5 0.5l8 8M8.5 0.5l-8 8" fill="none" stroke="#000" stroke-width="1" /></svg>
</div>
<div class="sunk g" style="left:149px;top:202px;width:225px;height:20px;"></div>
<div class="btn k" style="left:374px;top:202px;width:16px;height:20px;"><svg class="i" style="left:3px;top:10px;" width="8" height="2" viewBox="0 0 8 2" shape-rendering="crispEdges"><rect x="0" y="0" width="2" height="2" fill="#000"/><rect x="3" y="0" width="2" height="2" fill="#000"/><rect x="6" y="0" width="2" height="2" fill="#000"/></svg>
</div>
<div class="btn" style="left:392px;top:202px;width:20px;height:20px;"><svg class="i" style="left:4.5px;top:4.5px;shape-rendering:auto" width="9" height="9" viewBox="0 0 9 9" shape-rendering="crispEdges"><path d="M0.5 0.5l8 8M8.5 0.5l-8 8" fill="none" stroke="#000" stroke-width="1" /></svg>
</div>
<div class="sunk g" style="left:149px;top:228px;width:225px;height:20px;"><div class="t" style="top:4.19px;font-size:11px;line-height:13px;left:67px;transform:scaleY(1.13);transform-origin:0 10.31px;">А, 2,1м</div>
</div>
<div class="btn k" style="left:374px;top:228px;width:16px;height:20px;"><svg class="i" style="left:3px;top:10px;" width="8" height="2" viewBox="0 0 8 2" shape-rendering="crispEdges"><rect x="0" y="0" width="2" height="2" fill="#000"/><rect x="3" y="0" width="2" height="2" fill="#000"/><rect x="6" y="0" width="2" height="2" fill="#000"/></svg>
</div>
<div class="btn" style="left:392px;top:228px;width:20px;height:20px;"><svg class="i" style="left:4.5px;top:4.5px;shape-rendering:auto" width="9" height="9" viewBox="0 0 9 9" shape-rendering="crispEdges"><path d="M0.5 0.5l8 8M8.5 0.5l-8 8" fill="none" stroke="#000" stroke-width="1" /></svg>
</div>
<div class="sunk" style="left:149px;top:254px;width:240px;height:20px;"></div>
<div class="btn" style="left:372px;top:256px;width:15px;height:16px;"><svg class="i" style="left:3px;top:5px;" width="7" height="4" viewBox="0 0 7 4" shape-rendering="crispEdges"><path d="M0 0h7l-3.5 4z" fill="#000" /></svg>
</div>
<div class="chk" style="left:251px;top:299px;width:13px;height:13px;"><svg class="i" style="left:2px;top:2px;" width="7" height="7" viewBox="0 0 7 7" shape-rendering="crispEdges"><path d="M0 2l0 3l2.5 2.5l4.5 -4.5l0 -3l-4.5 4.5z" fill="#000" /></svg>
</div>
<div class="t" style="top:299.09px;font-size:11px;line-height:13px;left:269.6px;transform:scaleY(1.13);transform-origin:0 10.31px;">скрыть сумму</div>
<div class="chk" style="left:251px;top:325px;width:13px;height:13px;"></div>
<div class="t" style="top:324.89px;font-size:11px;line-height:13px;left:269.6px;transform:scaleY(1.13);transform-origin:0 10.31px;">скрыть цену и сумму</div>
<div class="btn" style="left:154px;top:356px;width:81px;height:22px;"></div>
<div class="t" style="top:352.19px;font-size:11px;line-height:13px;left:338.5px;color:#800000;transform:scaleY(1.13);transform-origin:0 10.31px;">Салон продаж "БЕЛКА":</div>
<div class="t" style="top:364.49px;font-size:11px;line-height:13px;left:346.7px;color:#800000;transform:scaleY(1.13);transform-origin:0 10.31px;">http://www.belkamag.ru</div>
</div></div>
<!-- part_dlg -->
<div class="win" style="left:280px;top:266px;width:654px;height:409px;"><div style="left:-1px;top:-1px"><div class="ta" style="left:3px;top:4px;width:649px;height:18px;"></div>
<div style="left:3px;top:23px;width:649px;height:1px;background:#fff"></div>
<svg class="i" style="left:5px;top:5px;" width="16" height="16" viewBox="0 0 16 16" shape-rendering="crispEdges"><rect x="1.5" y="5" width="7.5" height="6" fill="#fff"/><rect x="5" y="3" width="3" height="1" fill="#fff"/><rect x="3" y="4" width="5" height="1" fill="#c8d0ff"/><rect x="2" y="13" width="1" height="1.2" fill="#fff"/><rect x="4.5" y="13" width="1" height="1.2" fill="#fff"/><rect x="7" y="13" width="1.5" height="1.2" fill="#fff"/><rect x="2" y="11" width="1" height="2" fill="#c0c8ff"/><rect x="11.5" y="3" width="1.3" height="6" fill="#fff"/><rect x="10.5" y="4" width="1" height="1" fill="#fff"/><path d="M13.5 6q2 3 -2 6" fill="none" stroke="#a8b8ff" stroke-width="1" shape-rendering="auto"/><rect x="4" y="9" width="1" height="2" fill="#000080"/><rect x="6" y="9" width="1" height="2" fill="#000080"/><rect x="4" y="8.5" width="3" height="0.8" fill="#000080"/><rect x="9" y="6" width="1" height="4" fill="#d0d8ff"/></svg>
<div class="t" style="top:7.49px;font-size:11px;line-height:13px;left:22.5px;font-weight:bold;color:#fff;letter-spacing:0.25px;">Сведения о номенклатуре:Липа.Грибок, липа.Грибок, липа, класс А.Грибок, липа, класс А, 2,2м</div>
<div class="btn" style="left:599px;top:6px;width:16px;height:14px;"><div style="left:3px;top:8px;width:6px;height:2px;background:#000"></div>
</div>
<div class="btn" style="left:615px;top:6px;width:16px;height:14px;"><div style="left:2px;top:1px;width:9px;height:9px;border:1px solid #000;border-top-width:2px"></div>
</div>
<div class="btn" style="left:633px;top:6px;width:16px;height:14px;"><svg class="i" style="left:3px;top:2px;shape-rendering:auto" width="8" height="7" viewBox="0 0 8 7" shape-rendering="crispEdges"><path d="M0 0h2l2 2l2 -2h2l-3 3.5l3 3.5h-2l-2 -2l-2 2h-2l3 -3.5z" fill="#000" /></svg>
</div>
<svg class="i" style="left:12px;top:30px;" width="16" height="16" viewBox="0 0 16 16" shape-rendering="crispEdges"><path d="M2.5 1.5h8l3 3v10h-11z" fill="#fff" stroke="#000" stroke-width="1" /><path d="M10.5 1.5v3h3" fill="none" stroke="#000" stroke-width="1" /><rect x="2" y="1" width="1" height="13" fill="#d8d890"/><rect x="2" y="1" width="8" height="1" fill="#d8d890"/><text x="7.800" y="13" font-family="Liberation Sans,sans-serif" font-weight="bold" font-size="11.5" text-anchor="middle" fill="#000040" shape-rendering="auto">?</text></svg>
<svg class="i" style="left:35px;top:30px;" width="16" height="16" viewBox="0 0 16 16" shape-rendering="crispEdges"><path d="M1.5 1v12l3 -3l2 5l2 -1l-2 -5h4z" fill="#fff" stroke="#000" stroke-width="1" shape-rendering="auto"/><path d="M2 2v9l2 -2z" fill="#000" shape-rendering="auto"/><text x="12.500" y="10" font-family="Liberation Sans,sans-serif" font-weight="bold" font-size="10.5" text-anchor="middle" fill="#000080" shape-rendering="auto">?</text></svg>
<div class="panel" style="left:4px;top:52px;width:647px;height:351px;"></div>
<div style="left:6px;top:54px;width:67px;height:21px;border:1px solid;border-color:#fff #404040 transparent #fff;box-shadow:inset -1px 0 0 #808080;border-radius:2px 2px 0 0;border-bottom:none"></div>
<div class="t" style="top:58.09px;font-size:11px;line-height:13px;left:13.5px;transform:scaleY(1.13);transform-origin:0 10.31px;">Основные</div>
<div style="left:73px;top:56px;width:98px;height:19px;border:1px solid;border-color:#fff #404040 transparent #fff;box-shadow:inset -1px 0 0 #808080;border-radius:2px 2px 0 0;border-left:none;border-bottom:none"></div>
<div class="t" style="top:59.09px;font-size:11px;line-height:13px;left:78px;transform:scaleY(1.13);transform-origin:0 10.31px;">Дополнительные</div>
<div style="left:72px;top:74px;width:577px;height:1px;background:#fff"></div>
<div style="left:6px;top:74px;width:1px;height:327px;background:#fff"></div>
<div style="left:648px;top:74px;width:1px;height:328px;background:#404040"></div>
<div style="left:647px;top:75px;width:1px;height:326px;background:#808080"></div>
<div class="t" style="top:84.99px;font-size:11px;line-height:13px;left:18px;font-weight:bold;letter-spacing:0px;transform:scaleY(1.13);transform-origin:0 10.31px;">Вид:</div>
<div class="t" style="top:84.99px;font-size:11px;line-height:13px;left:104.5px;font-weight:bold;letter-spacing:0.5px;transform:scaleY(1.13);transform-origin:0 10.31px;">Наименование:</div>
<div class="t" style="top:84.99px;font-size:11px;line-height:13px;left:484px;transform:scaleY(1.13);transform-origin:0 10.31px;">Код:</div>
<div class="sunk" style="left:17px;top:100px;width:61px;height:20px;overflow:hidden"><div style="left:2px;top:3px;width:54px;height:13px;background:#0a246a"></div>
<div class="t" style="top:4.49px;font-size:11px;line-height:13px;left:2px;color:#fff;transform:scaleY(1.13);transform-origin:0 10.31px;">Товар (пр.</div>
</div>
<div class="btn k" style="left:78px;top:100px;width:16px;height:20px;"><svg class="i" style="left:3px;top:10px;" width="8" height="2" viewBox="0 0 8 2" shape-rendering="crispEdges"><rect x="0" y="0" width="2" height="2" fill="#000"/><rect x="3" y="0" width="2" height="2" fill="#000"/><rect x="6" y="0" width="2" height="2" fill="#000"/></svg>
</div>
<div class="sunk" style="left:104px;top:100px;width:371px;height:20px;"><div class="t" style="top:4.49px;font-size:11px;line-height:13px;left:2px;transform:scaleY(1.13);transform-origin:0 10.31px;">Грибок, липа, класс А, 2,2м</div>
</div>
<div class="sunk" style="left:485px;top:100px;width:156px;height:20px;"><div class="t" style="top:4.49px;font-size:11px;line-height:13px;left:2px;transform:scaleY(1.13);transform-origin:0 10.31px;">00000521</div>
</div>
<div class="t" style="top:126.99px;font-size:11px;line-height:13px;left:18px;font-weight:bold;letter-spacing:0.5px;transform:scaleY(1.13);transform-origin:0 10.31px;">Наименование для печати:</div>
<div class="t" style="top:126.99px;font-size:11px;line-height:13px;left:483.5px;transform:scaleY(1.13);transform-origin:0 10.31px;">Артикул:</div>
<div class="sunk" style="left:17px;top:142px;width:457px;height:36px;"><div class="t" style="top:3.49px;font-size:11px;line-height:13px;left:2px;transform:scaleY(1.13);transform-origin:0 10.31px;">Грибок, липа, класс А, 2,2м</div>
</div>
<div class="btn" style="left:457px;top:144px;width:16px;height:16px;"><svg class="i" style="left:4px;top:5px;" width="7" height="4" viewBox="0 0 7 4" shape-rendering="crispEdges"><path d="M0 4h7l-3.5 -4z" fill="#808080" /></svg>
</div>
<div class="btn" style="left:457px;top:160px;width:16px;height:16px;"><svg class="i" style="left:4px;top:6px;" width="7" height="4" viewBox="0 0 7 4" shape-rendering="crispEdges"><path d="M0 0h7l-3.5 4z" fill="#808080" /></svg>
</div>
<div class="sunk" style="left:483px;top:142px;width:156px;height:20px;"></div>
<div class="grp2" style="left:17px;top:193px;width:456px;height:115px;"></div>
<div class="face" style="left:23px;top:186px;width:108px;height:14px;"></div>
<div class="t" style="top:187.49px;font-size:11px;line-height:13px;left:25.5px;transform:scaleY(1.13);transform-origin:0 10.31px;">Единицы измерения</div>
<div class="t" style="top:207.99px;font-size:11px;line-height:13px;left:24.5px;font-weight:bold;letter-spacing:0.5px;transform:scaleY(1.13);transform-origin:0 10.31px;">Базовая:</div>
<div class="sunk g" style="left:99px;top:203px;width:102px;height:20px;"><div class="t" style="top:4.49px;font-size:11px;line-height:13px;left:2px;transform:scaleY(1.13);transform-origin:0 10.31px;">пог. м</div>
</div>
<div class="btn k" style="left:201px;top:203px;width:16px;height:20px;"><svg class="i" style="left:3px;top:10px;" width="8" height="2" viewBox="0 0 8 2" shape-rendering="crispEdges"><rect x="0" y="0" width="2" height="2" fill="#000"/><rect x="3" y="0" width="2" height="2" fill="#000"/><rect x="6" y="0" width="2" height="2" fill="#000"/></svg>
</div>
<div class="t" style="top:234.19px;font-size:11px;line-height:13px;left:24.5px;transform:scaleY(1.13);transform-origin:0 10.31px;">Штрихкод:</div>
<div class="sunk" style="left:99px;top:229px;width:92px;height:20px;"></div>
<div class="btn" style="left:195px;top:229px;width:23px;height:20px;"><div class="t" style="top:3.49px;font-size:11px;line-height:13px;left:0px;transform:scaleY(1.13);transform-origin:0 10.31px;width:100%;text-align:center">&lt;-</div>
</div>
<div class="t" style="top:260.29px;font-size:11px;line-height:13px;left:24.5px;transform:scaleY(1.13);transform-origin:0 10.31px;">Вес: (кг)</div>
<div class="sunk" style="left:99px;top:255px;width:102px;height:20px;"><div class="t" style="top:4.49px;font-size:11px;line-height:13px;right:3px;transform:scaleY(1.13);transform-origin:0 10.31px;">0.000</div>
</div>
<div class="btn k" style="left:201px;top:255px;width:16px;height:20px;"><svg class="i" style="left:3px;top:5px;" width="8" height="8" viewBox="0 0 8 8" shape-rendering="crispEdges"><rect x="0" y="0" width="8" height="8" fill="#000"/><rect x="1" y="1" width="6" height="2" fill="#fff"/><rect x="1" y="4" width="1" height="1" fill="#fff"/><rect x="1" y="6" width="1" height="1" fill="#fff"/><rect x="3" y="4" width="1" height="1" fill="#fff"/><rect x="3" y="6" width="1" height="1" fill="#fff"/><rect x="5" y="4" width="1" height="1" fill="#fff"/><rect x="5" y="6" width="1" height="1" fill="#fff"/></svg>
</div>
<div class="chk" style="left:24px;top:285px;width:13px;height:13px;"></div>
<div class="t" style="top:285.49px;font-size:11px;line-height:13px;left:42.5px;letter-spacing:0.09px;transform:scaleY(1.13);transform-origin:0 10.31px;">Использовать только базовую единицу</div>
<div class="t" style="top:207.99px;font-size:11px;line-height:13px;left:267.5px;font-weight:bold;letter-spacing:0.5px;transform:scaleY(1.13);transform-origin:0 10.31px;">Основная:</div>
<div class="sunk g" style="left:350px;top:203px;width:102px;height:20px;"><div class="t" style="top:4.49px;font-size:11px;line-height:13px;left:2px;transform:scaleY(1.13);transform-origin:0 10.31px;">шт</div>
</div>
<div class="btn k" style="left:452px;top:203px;width:16px;height:20px;"><svg class="i" style="left:3px;top:10px;" width="8" height="2" viewBox="0 0 8 2" shape-rendering="crispEdges"><rect x="0" y="0" width="2" height="2" fill="#000"/><rect x="3" y="0" width="2" height="2" fill="#000"/><rect x="6" y="0" width="2" height="2" fill="#000"/></svg>
</div>
<div class="t" style="top:234.19px;font-size:11px;line-height:13px;left:268px;transform:scaleY(1.13);transform-origin:0 10.31px;">Штрихкод:</div>
<div class="sunk" style="left:350px;top:229px;width:92px;height:20px;"></div>
<div class="btn" style="left:446px;top:229px;width:23px;height:20px;"><div class="t" style="top:3.49px;font-size:11px;line-height:13px;left:0px;transform:scaleY(1.13);transform-origin:0 10.31px;width:100%;text-align:center">&lt;-</div>
</div>
<div class="t" style="top:260.29px;font-size:11px;line-height:13px;left:268px;transform:scaleY(1.13);transform-origin:0 10.31px;">Коэфф.:</div>
<div class="sunk" style="left:350px;top:255px;width:102px;height:20px;"><div class="t" style="top:4.49px;font-size:11px;line-height:13px;right:3px;transform:scaleY(1.13);transform-origin:0 10.31px;">0.200</div>
</div>
<div class="btn k" style="left:452px;top:255px;width:16px;height:20px;"><svg class="i" style="left:3px;top:5px;" width="8" height="8" viewBox="0 0 8 8" shape-rendering="crispEdges"><rect x="0" y="0" width="8" height="8" fill="#000"/><rect x="1" y="1" width="6" height="2" fill="#fff"/><rect x="1" y="4" width="1" height="1" fill="#fff"/><rect x="1" y="6" width="1" height="1" fill="#fff"/><rect x="3" y="4" width="1" height="1" fill="#fff"/><rect x="3" y="6" width="1" height="1" fill="#fff"/><rect x="5" y="4" width="1" height="1" fill="#fff"/><rect x="5" y="6" width="1" height="1" fill="#fff"/></svg>
</div>
<div class="t" style="top:286.29px;font-size:11px;line-height:13px;left:268px;transform:scaleY(1.13);transform-origin:0 10.31px;">Вес: (кг)</div>
<div class="sunk" style="left:350px;top:281px;width:102px;height:20px;"><div class="t" style="top:4.49px;font-size:11px;line-height:13px;right:3px;transform:scaleY(1.13);transform-origin:0 10.31px;">0.000</div>
</div>
<div class="btn k" style="left:452px;top:281px;width:16px;height:20px;"><svg class="i" style="left:3px;top:5px;" width="8" height="8" viewBox="0 0 8 8" shape-rendering="crispEdges"><rect x="0" y="0" width="8" height="8" fill="#000"/><rect x="1" y="1" width="6" height="2" fill="#fff"/><rect x="1" y="4" width="1" height="1" fill="#fff"/><rect x="1" y="6" width="1" height="1" fill="#fff"/><rect x="3" y="4" width="1" height="1" fill="#fff"/><rect x="3" y="6" width="1" height="1" fill="#fff"/><rect x="5" y="4" width="1" height="1" fill="#fff"/><rect x="5" y="6" width="1" height="1" fill="#fff"/></svg>
</div>
<div class="grp2" style="left:483px;top:193px;width:155px;height:115px;"></div>
<div class="face" style="left:489px;top:186px;width:42px;height:14px;"></div>
<div class="t" style="top:187.49px;font-size:11px;line-height:13px;left:491.5px;transform:scaleY(1.13);transform-origin:0 10.31px;">Налоги</div>
<div class="t" style="top:207.99px;font-size:11px;line-height:13px;left:495px;transform:scaleY(1.13);transform-origin:0 10.31px;">%НДС:</div>
<div class="sunk g" style="left:540px;top:203px;width:70px;height:20px;"><div class="t" style="top:4.49px;font-size:11px;line-height:13px;left:2px;transform:scaleY(1.13);transform-origin:0 10.31px;">Без НДС</div>
</div>
<div class="btn k" style="left:610px;top:203px;width:16px;height:20px;"><svg class="i" style="left:3px;top:10px;" width="8" height="2" viewBox="0 0 8 2" shape-rendering="crispEdges"><rect x="0" y="0" width="2" height="2" fill="#000"/><rect x="3" y="0" width="2" height="2" fill="#000"/><rect x="6" y="0" width="2" height="2" fill="#000"/></svg>
</div>
<div class="t" style="top:234.19px;font-size:11px;line-height:13px;left:495px;transform:scaleY(1.13);transform-origin:0 10.31px;">%НП :</div>
<div class="sunk g" style="left:540px;top:229px;width:70px;height:20px;"><div class="t" style="top:4.49px;font-size:11px;line-height:13px;left:2px;transform:scaleY(1.13);transform-origin:0 10.31px;">Без налога</div>
</div>
<div class="btn k" style="left:610px;top:229px;width:16px;height:20px;"><svg class="i" style="left:3px;top:10px;" width="8" height="2" viewBox="0 0 8 2" shape-rendering="crispEdges"><rect x="0" y="0" width="2" height="2" fill="#000"/><rect x="3" y="0" width="2" height="2" fill="#000"/><rect x="6" y="0" width="2" height="2" fill="#000"/></svg>
</div>
<div class="grp2" style="left:17px;top:323px;width:456px;height:38px;"></div>
<div class="face" style="left:23px;top:316px;width:56px;height:14px;"></div>
<div class="t" style="top:317.49px;font-size:11px;line-height:13px;left:25.5px;transform:scaleY(1.13);transform-origin:0 10.31px;">Признаки</div>
<div class="chk" style="left:33px;top:339px;width:13px;height:13px;"></div>
<div class="t" style="top:339.49px;font-size:11px;line-height:13px;left:50.4px;transform:scaleY(1.13);transform-origin:0 10.31px;">Не включать в прайс</div>
<div class="chk" style="left:193px;top:339px;width:13px;height:13px;"></div>
<div class="t" style="top:339.49px;font-size:11px;line-height:13px;left:210.4px;transform:scaleY(1.13);transform-origin:0 10.31px;">Весовой</div>
<div class="t" style="top:323.99px;font-size:11px;line-height:13px;left:485.4px;font-weight:bold;color:#000080;letter-spacing:0.27px;transform:scaleY(1.13);transform-origin:0 10.31px;"><u>Штрихкоды единиц&nbsp;</u></div>
<div class="t" style="top:337.09px;font-size:11px;line-height:13px;left:485.4px;font-weight:bold;color:#000080;letter-spacing:0.67px;transform:scaleY(1.13);transform-origin:0 10.31px;"><u>измерения можно ввести</u></div>
<div class="t" style="top:350.19px;font-size:11px;line-height:13px;left:485.4px;font-weight:bold;color:#000080;letter-spacing:0.72px;transform:scaleY(1.13);transform-origin:0 10.31px;"><u>со сканера&nbsp;</u></div>
<div class="btn" style="left:15px;top:373px;width:81px;height:21px;"><div class="t" style="top:3.99px;font-size:11px;line-height:13px;left:0px;transform:scaleY(1.13);transform-origin:0 10.31px;width:100%;text-align:center">Записать</div>
</div>
<div class="btn" style="left:99px;top:373px;width:81px;height:21px;"><div class="t" style="top:3.99px;font-size:11px;line-height:13px;left:0px;transform:scaleY(1.13);transform-origin:0 10.31px;width:100%;text-align:center">OK</div>
</div>
<div class="btn" style="left:183px;top:373px;width:81px;height:21px;"><div class="t" style="top:3.99px;font-size:11px;line-height:13px;left:0px;transform:scaleY(1.13);transform-origin:0 10.31px;width:100%;text-align:center"><u>З</u>акрыть</div>
</div>
<div class="btn" style="left:266px;top:373px;width:17px;height:21px;"><svg class="i" style="left:4px;top:8px;" width="7" height="4" viewBox="0 0 7 4" shape-rendering="crispEdges"><path d="M0 0h7l-3.5 4z" fill="#000" /></svg>
</div>
<div class="btn" style="left:284px;top:373px;width:81px;height:21px;"><div class="t" style="top:3.99px;font-size:11px;line-height:13px;left:0px;transform:scaleY(1.13);transform-origin:0 10.31px;width:100%;text-align:center">Ценник</div>
</div>
<div class="btn" style="left:368px;top:373px;width:81px;height:21px;"><div class="t" style="top:3.99px;font-size:11px;line-height:13px;left:0px;transform:scaleY(1.13);transform-origin:0 10.31px;width:100%;text-align:center">Справочники...</div>
</div>
<div style="left:198px;top:264px;width:231px;height:17px;background:#ffffe1;border:1px solid #000"><div class="t" style="top:2.49px;font-size:11px;line-height:13px;left:2px;">Сформировать штрих-код базовой единицы</div>
</div>
</div></div>
</body></html>
